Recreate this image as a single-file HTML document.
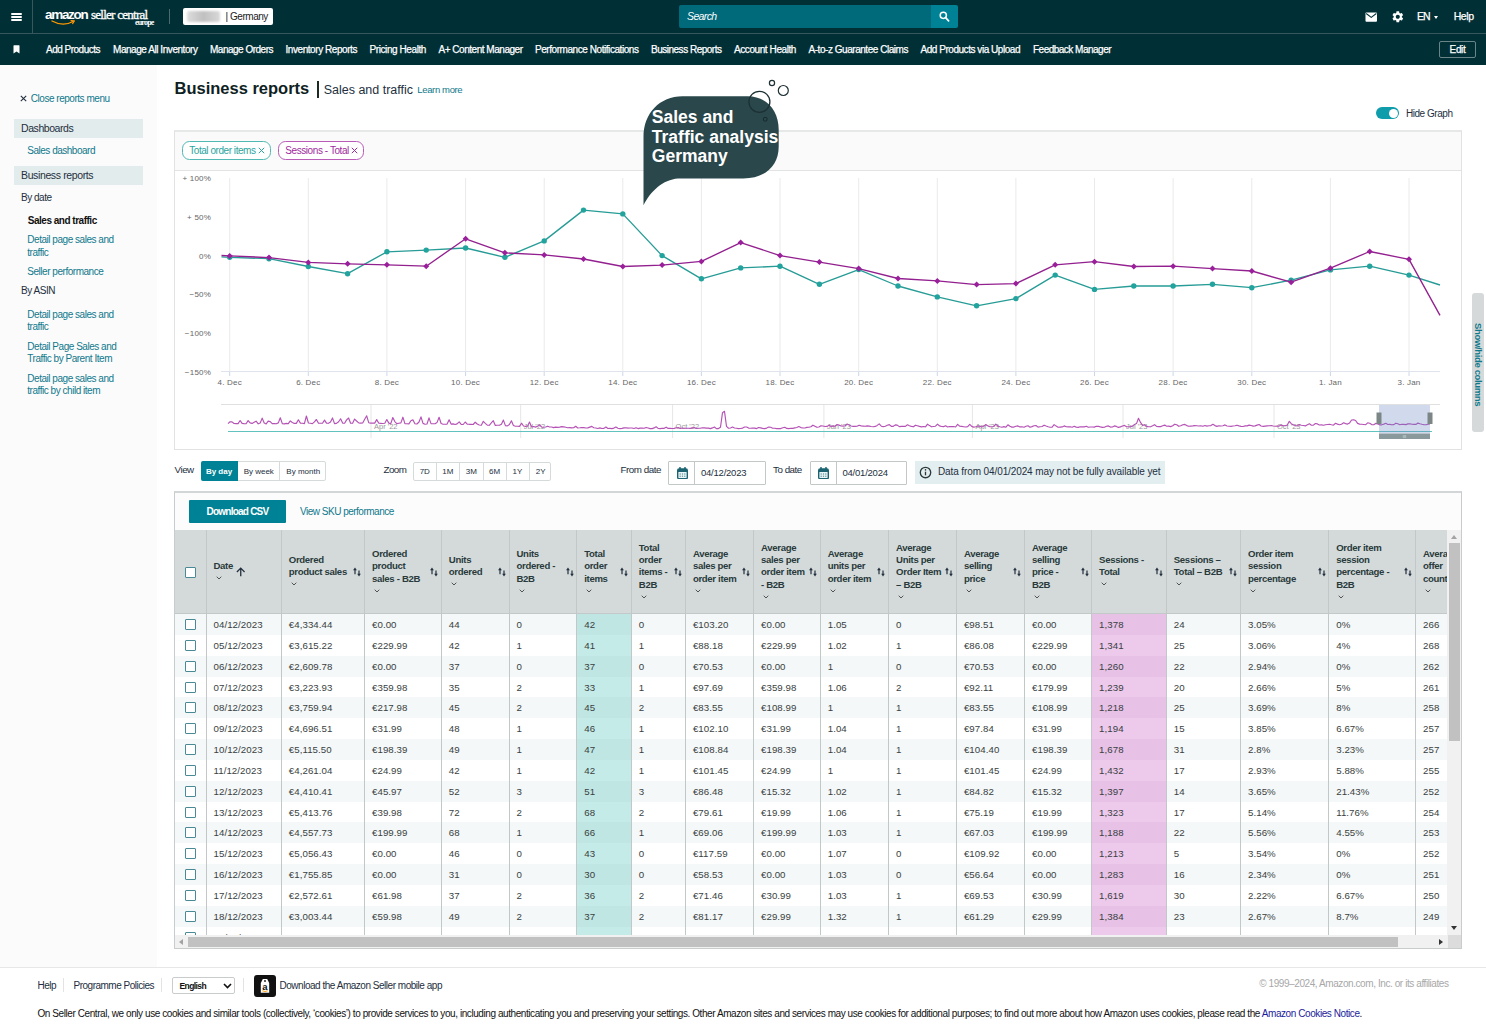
<!DOCTYPE html>
<html lang="en"><head><meta charset="utf-8"><title>Business reports - Sales and traffic</title>
<style>*{box-sizing:border-box;margin:0;padding:0}
html,body{width:1486px;height:1024px;overflow:hidden;background:#fff;font-family:"Liberation Sans",sans-serif;color:#232f3e}
.abs{position:absolute}
#hdr{position:absolute;left:0;top:0;width:1486px;height:65px;background:#002f36}
#hdr .hline{position:absolute;left:0;top:33px;width:1486px;height:1px;background:#37575c}
#hdr .vline{position:absolute;left:32px;top:0;width:1px;height:33px;background:#37575c}
#hdr .burger{position:absolute;left:11px;top:13px;width:11px;height:9px}
#hdr .burger i{display:block;height:1.8px;background:#fff;margin-bottom:1.3px;border-radius:1px}
.logo{position:absolute;left:45px;top:7px;color:#fff;white-space:nowrap;width:120px;height:22px}
.logo .a{position:absolute;left:0;top:0;font:bold 13.5px "Liberation Sans",sans-serif;letter-spacing:-0.7px;line-height:15px}
.logo .s{position:absolute;left:46px;top:0;font:13px "Liberation Serif",serif;line-height:15px;-webkit-text-stroke:0.3px #fff}
.logo .e{position:absolute;left:90px;top:11px;font:bold 8px "Liberation Serif",serif;letter-spacing:-0.3px;line-height:9px}
.logo .smile{position:absolute;left:6px;top:13px}
.sep1{position:absolute;left:169px;top:9px;width:1px;height:15px;background:#4a6a70}
.mkt{position:absolute;left:183px;top:8px;width:90px;height:17px;background:#fff;border-radius:2px;font-size:10.5px;color:#222;line-height:17px}
.mkt b{position:absolute;left:4px;top:3px;width:33px;height:11px;background:linear-gradient(90deg,#ddd,#c0c0c0 50%,#d8d8d8);border-radius:2px;filter:blur(1.2px)}
.mkt span{position:absolute;left:42.5px;top:0;font-weight:normal;white-space:nowrap}
.search{position:absolute;left:679px;top:4.8px;width:252px;height:23.7px;background:#00697a;color:#fff;font:italic 10.5px "Liberation Sans",sans-serif;line-height:23px;padding-left:8px;border-radius:2px 0 0 2px}
.sbtn{position:absolute;left:931px;top:4.8px;width:27px;height:23.7px;background:#008296;border-radius:0 2px 2px 0}
.nav{position:absolute;top:44px;left:0;color:#fff;font-size:10.5px;white-space:nowrap;line-height:12px;-webkit-text-stroke:0.25px #fff}
.nav span{position:absolute;top:0}
.hr{position:absolute;top:10.3px;color:#fff;font-size:11px;line-height:13px;-webkit-text-stroke:0.25px #fff;white-space:nowrap}
#hdr .caret{position:absolute;left:1434.2px;top:15.6px;width:0;height:0;border-left:2.8px solid transparent;border-right:2.8px solid transparent;border-top:3.2px solid #fff}
.edit{position:absolute;left:1439px;top:41px;width:37px;height:17px;border:1px solid #6a858a;border-radius:2px;color:#fff;font-size:10.5px;text-align:center;line-height:15px;-webkit-text-stroke:0.25px #fff}
#side{position:absolute;left:0;top:65px;width:157px;height:901.6px;background:#fbfbfb}
#side .it{position:absolute;font-size:10.5px;line-height:12.7px;margin-top:0.6px;color:#10798c;white-space:nowrap}
#side .sec{position:absolute;left:14px;width:129px;height:19px;background:#e3ecec;font-size:11px;line-height:19px;padding-left:7px;color:#232f3e}
#side .hd{position:absolute;margin-top:0.6px;font-size:10.5px;line-height:12px;color:#232f3e}
h1{position:absolute;left:174.5px;top:77.6px;font:bold 16.5px "Liberation Sans",sans-serif;line-height:20px;color:#0f1f24;white-space:nowrap}
.vbar{position:absolute;left:317px;top:81px;width:1.6px;height:16.5px;background:#1c2b22}
.t14{position:absolute;left:323.8px;top:81.5px;line-height:16px;color:#232f3e;white-space:nowrap}
.lm{position:absolute;left:417.3px;top:84.3px;line-height:12px;color:#10798c;white-space:nowrap}
.sub{position:absolute;left:315.5px;top:77px;white-space:nowrap;line-height:22px}
.sub .bar{font-size:19px;color:#23351f}
.sub .t{font-size:14px;color:#232f3e}
.sub .l{font-size:9.5px;color:#10798c}
.toggle{position:absolute;left:1376px;top:107px;width:23px;height:12px;border-radius:6px;background:#0f9cab}
.toggle i{position:absolute;right:1.5px;top:1.5px;width:9px;height:9px;border-radius:5px;background:#fff}
.hg{position:absolute;left:1406px;top:107px;font-size:10.5px;line-height:13px;color:#232f3e}
#chart{position:absolute;left:174px;top:130px;width:1288px;height:320px;border:1px solid #e1e3e3;border-top:2px solid #e6e8e8;background:#fff}
#chart .chips{position:absolute;left:0;top:0;width:1286px;height:39px;background:#fafafa;border-bottom:1px solid #e2e4e4}
#chart svg.abs{left:-1px !important;top:-2px !important}
.chip{position:absolute;top:9.2px;height:19px;border-radius:7.5px;font-size:10px;line-height:17.4px;padding-left:6.6px;white-space:nowrap;background:#fff}
.chip .x{margin-left:2.5px;position:relative;top:0px}
.ax{font:8px "Liberation Sans",sans-serif;fill:#666;letter-spacing:0.2px}
.nv{font:7.5px "Liberation Sans",sans-serif;fill:#999}
.bb{font:bold 17.5px "Liberation Sans",sans-serif;fill:#fff}
.lbl{position:absolute;font-size:10.5px;line-height:13px;color:#232f3e;white-space:nowrap}
.seg{position:absolute;border:1px solid #d5dbdb;border-radius:2px;background:#fff;font-size:8px;color:#232f3e}
.seg span{position:absolute;top:-1px;bottom:-1px;text-align:center;border-right:1px solid #d5dbdb;display:flex;align-items:center;justify-content:center}
.seg span.on{background:#008296;color:#fff;font-weight:bold;left:-1px !important;border-radius:2px 0 0 2px;border-right:0}
.date{position:absolute;width:97.5px;height:23.5px;border:1.3px solid #c2c8c8;border-radius:1px;background:#fff;font-size:10px;color:#232f3e}
.date i{position:absolute;left:0;top:0;width:26px;height:100%;padding-left:1.4px;border-right:1.2px solid #c2c8c8;display:flex;align-items:center;justify-content:center}
.date span{position:absolute;left:32px;top:0;line-height:21.4px}
.info{position:absolute;width:250px;height:22.6px;background:#e3eef0;font-size:10.5px;line-height:22.6px;color:#232f3e;white-space:nowrap}
.info svg{position:absolute;left:4.3px;top:4.6px}
.info span{position:absolute;left:23.5px;top:0}
#tbox{position:absolute;left:174px;top:491px;width:1288px;height:458px;border:1px solid #c8cccc;border-top:2px solid #d3d6d6;background:#fcfcfc}
.dl{position:absolute;left:14px;top:6.5px;width:97px;height:23.6px;padding-top:0.8px;background:#008296;color:#fff;font-size:10.5px;font-weight:bold;letter-spacing:-0.3px;text-align:center;line-height:23.6px;border-radius:1px}
.sku{position:absolute;left:125px;top:12.6px;font-size:10px;color:#10798c;line-height:12px}
#tv{position:absolute;overflow:hidden;background:#fff}
.th-bg{position:absolute;left:0;top:0;width:100%;background:#d4dada;border-bottom:1px solid #c3c9c9}
.rowbg{position:absolute;left:0;width:100%}
.vb{position:absolute;top:0;width:1px;height:100%;background:#c2c8c8}
.th{position:absolute;top:0;height:83px;display:flex;align-items:center;font-size:9.6px;font-weight:bold;color:#2a3a3c;line-height:12.3px;letter-spacing:-0.33px;padding-top:2px}
.th .tx{-webkit-text-stroke:0px}
.th .srt{position:absolute;right:2.6px;top:36.5px}
.th .chv{position:relative;top:-1.2px;left:2px}
.th .up{position:relative;top:7.3px;margin-left:0.6px;margin-top:-8px}
.td{position:absolute;font-size:9.7px;color:#3a3f42;white-space:nowrap;letter-spacing:0.06px}
.cb{position:absolute;width:11px;height:11px;border:1px solid #4a8a96;background:#fff;border-radius:1px}
.vsb{position:absolute;left:1447px;top:530px;width:14px;height:405px;background:#f1f1f1}
.vsb b{position:absolute;left:2px;top:13px;width:11px;height:198px;background:#c1c1c1}
.vsb i{position:absolute;left:3.5px;width:0;height:0;border-left:3px solid transparent;border-right:3px solid transparent}
.vsb i.up{top:5px;border-bottom:4px solid #a3a3a3}
.vsb i.dn{bottom:5px;border-top:4px solid #333}
.hsb{position:absolute;left:175px;top:935px;width:1286px;height:13px;background:#f1f1f1}
.hsb b{position:absolute;left:13px;top:1.5px;width:1210px;height:10.5px;background:#c1c1c1}
.hsb i{position:absolute;top:3.5px;width:0;height:0;border-top:3px solid transparent;border-bottom:3px solid transparent}
.hsb i.lf{left:4px;border-right:4px solid #a3a3a3}
.hsb i.rt{right:18px;border-left:4px solid #333}
.shc{position:absolute;left:1472px;top:293px;width:12px;height:138.5px;background:#d6d9d9;border-radius:3px}
.shc span{position:absolute;left:6px;top:30px;font-weight:bold;letter-spacing:-0.35px;transform-origin:0 0;transform:rotate(90deg) translateY(-50%);font-size:9.5px;color:#10798c;white-space:nowrap;line-height:12px}
.fline{position:absolute;left:0;top:966.6px;width:1486px;height:1px;background:#e7e7e7}
.ft{position:absolute;font-size:10.5px;line-height:13px;color:#232f3e;white-space:nowrap}
.fsep{position:absolute;top:978px;width:1px;height:14px;background:#e3e3e3}
.sel{position:absolute;left:171.5px;top:976.5px;width:63.5px;height:17.5px;border:1px solid #c9cccc;border-radius:2px;font-size:9.5px;font-weight:bold;line-height:16px;padding-left:7px;color:#111;background:#fff}
.sel svg{position:absolute;right:2.5px;top:5px}
.app{position:absolute;left:253.5px;top:975px;width:22px;height:22px}
.ck{position:absolute;left:37.5px;top:1007px;font-size:10px;line-height:13px;color:#111;white-space:nowrap}
.ck span{color:#1b1b9c}
.hsb u{position:absolute;right:0;top:0;width:13.5px;height:13px;background:#dcdcdc}
</style></head><body>

<div id="hdr">
 <div class="hline"></div><div class="vline"></div>
 <div class="burger"><i></i><i></i><i></i></div>
 <div class="logo"><span class="a" style="font-size:13.5px;letter-spacing:-1.310px;">amazon</span><span class="s" style="font-size:13px;letter-spacing:-0.740px;">seller central</span><span class="e" style="font-size:8px;letter-spacing:-0.818px;">europe</span>
  <svg class="smile" width="26" height="6" viewBox="0 0 26 6"><path d="M1 1 Q12 7 22 1.5" fill="none" stroke="#f90" stroke-width="1.4" stroke-linecap="round"/><path d="M20 0.6 L23.4 0.9 L21.6 3.6" fill="none" stroke="#f90" stroke-width="1.1" stroke-linecap="round" stroke-linejoin="round"/></svg>
 </div>
 <div class="sep1"></div>
 <div class="mkt"><b></b><span style="font-size:10px;letter-spacing:-0.455px;">| Germany</span></div>
 <div class="search" style="font-size:10.5px;letter-spacing:-0.628px;">Search</div>
 <div class="sbtn"><svg width="27" height="23" viewBox="0 0 27 23"><circle cx="12.3" cy="10.3" r="3.1" fill="none" stroke="#fff" stroke-width="1.5"/><path d="M14.6 12.7 L17.6 15.8" stroke="#fff" stroke-width="1.7" stroke-linecap="round"/></svg></div>
 <svg class="abs" style="left:1364.500px;top:11.800px" width="12.500" height="10.600" viewBox="0 0 13 11"><rect x="0.5" y="0.5" width="12" height="9.6" rx="1" fill="#fff"/><path d="M1.2 1.6 L6.5 5.6 L11.8 1.6" fill="none" stroke="#002f36" stroke-width="1.1"/></svg>
 <svg class="abs" style="left:1391px;top:10.300px" width="13.600" height="13.600" viewBox="0 0 24 24"><path fill="#fff" d="M19.14 12.94c.04-.3.06-.61.06-.94 0-.32-.02-.64-.07-.94l2.03-1.58a.49.49 0 0 0 .12-.61l-1.92-3.32a.488.488 0 0 0-.59-.22l-2.39.96c-.5-.38-1.03-.7-1.62-.94l-.36-2.54a.484.484 0 0 0-.48-.41h-3.84c-.24 0-.43.17-.47.41l-.36 2.54c-.59.24-1.13.57-1.62.94l-2.39-.96c-.22-.08-.47 0-.59.22L2.74 8.87c-.12.21-.08.47.12.61l2.03 1.58c-.05.3-.09.63-.09.94s.02.64.07.94l-2.03 1.58a.49.49 0 0 0-.12.61l1.92 3.32c.12.22.37.29.59.22l2.39-.96c.5.38 1.03.7 1.62.94l.36 2.54c.05.24.24.41.48.41h3.84c.24 0 .44-.17.47-.41l.36-2.54c.59-.24 1.13-.56 1.62-.94l2.39.96c.22.08.47 0 .59-.22l1.92-3.32c.12-.22.07-.47-.12-.61l-2.01-1.58zM12 15.6c-1.98 0-3.600-1.62-3.600-3.600s1.62-3.600 3.600-3.600 3.600 1.62 3.600 3.600-1.62 3.600-3.600 3.600z"/></svg>
 <div class="hr" style="left:1417px;font-size:10.5px;letter-spacing:-0.893px;">EN</div><i class="caret"></i>
 <div class="hr" style="left:1453.700px;font-size:10.5px;letter-spacing:-0.399px;">Help</div>
 <svg class="abs" style="left:13px;top:45px" width="7" height="9" viewBox="0 0 7 9"><path d="M0.5 0.8 Q0.5 0.3 1 0.3 H6 Q6.5 0.3 6.500 0.8 V8.600 L3.500 6.600 L0.500 8.600 Z" fill="#fff"/></svg>
 <div class="nav"><span style="left:46px;font-size:10px;letter-spacing:-0.503px;">Add Products</span><span style="left:113px;font-size:10px;letter-spacing:-0.444px;">Manage All Inventory</span><span style="left:210px;font-size:10px;letter-spacing:-0.498px;">Manage Orders</span><span style="left:285.5px;font-size:10px;letter-spacing:-0.437px;">Inventory Reports</span><span style="left:369.5px;font-size:10px;letter-spacing:-0.411px;">Pricing Health</span><span style="left:438.5px;font-size:10px;letter-spacing:-0.476px;">A+ Content Manager</span><span style="left:535px;font-size:10px;letter-spacing:-0.440px;">Performance Notifications</span><span style="left:651px;font-size:10px;letter-spacing:-0.492px;">Business Reports</span><span style="left:734px;font-size:10px;letter-spacing:-0.416px;">Account Health</span><span style="left:808.5px;font-size:10px;letter-spacing:-0.458px;">A-to-z Guarantee Claims</span><span style="left:920.5px;font-size:10px;letter-spacing:-0.459px;">Add Products via Upload</span><span style="left:1033px;font-size:10px;letter-spacing:-0.510px;">Feedback Manager</span></div>
 <div class="edit" style="font-size:10px;letter-spacing:-0.333px;">Edit</div>
</div>

<div id="side"><svg class="abs" style="left:19.500px;top:29.700px" width="7" height="7" viewBox="0 0 7 7"><path d="M0.8 0.8 L6.200 6.200 M6.200 0.8 L0.8 6.200" stroke="#232f3e" stroke-width="1.100"/></svg><div class="it" style="left:30.8px;top:27.5px;font-size:10px;letter-spacing:-0.470px;">Close reports menu</div><div class="sec" style="top:54px;font-size:10.5px;letter-spacing:-0.432px;">Dashboards</div><div class="it" style="left:27.3px;top:79.1px;font-size:10px;letter-spacing:-0.490px;">Sales dashboard</div><div class="sec" style="top:101.200px;font-size:10.5px;letter-spacing:-0.375px;">Business reports</div><div class="hd" style="left:21px;top:126px;font-size:10px;letter-spacing:-0.473px;">By date</div><div class="it" style="left:27.8px;top:149px;color:#111;font-weight:bold;font-size:10px;letter-spacing:-0.491px;">Sales and traffic</div><div class="it" style="left:27.3px;top:168.5px;font-size:10px;letter-spacing:-0.47px;">Detail page sales and<br>traffic</div><div class="it" style="left:27.3px;top:200px;font-size:10px;letter-spacing:-0.47px;">Seller performance</div><div class="hd" style="left:21px;top:219.5px;font-size:10px;letter-spacing:-0.47px;">By ASIN</div><div class="it" style="left:27.3px;top:243px;font-size:10px;letter-spacing:-0.47px;">Detail page sales and<br>traffic</div><div class="it" style="left:27.3px;top:275px;font-size:10px;letter-spacing:-0.47px;">Detail Page Sales and<br>Traffic by Parent Item</div><div class="it" style="left:27.3px;top:307px;font-size:10px;letter-spacing:-0.47px;">Detail page sales and<br>traffic by child item</div></div>

<h1 style="font-size:16.5px;letter-spacing:0.000px;">Business reports</h1>
<div class="vbar"></div>
<div class="t14" style="font-size:12.5px;letter-spacing:-0.018px;">Sales and traffic</div>
<div class="lm" style="font-size:9.5px;letter-spacing:-0.358px;">Learn more</div>
<div class="toggle"><i></i></div><div class="hg" style="font-size:10px;letter-spacing:-0.464px;">Hide Graph</div>


<div id="chart">
 <div class="chips"></div>
 <div class="chip" style="left:6.700px;width:89.500px;color:#2aa5a0;border:1.500px solid #52b8b3"><span style="font-size:10px;letter-spacing:-0.454px;">Total order items</span><svg class="x" width="7" height="7" viewBox="0 0 7 7"><path d="M0.8 0.8 L6.200 6.200 M6.200 0.8 L0.8 6.200" stroke="#2aa5a0" stroke-width="1"/></svg></div>
 <div class="chip" style="left:102.700px;width:86px;color:#a02aa0;border:1.500px solid #b85cb8"><span style="font-size:10px;letter-spacing:-0.425px;">Sessions - Total</span><svg class="x" width="7" height="7" viewBox="0 0 7 7"><path d="M0.8 0.8 L6.200 6.200 M6.200 0.8 L0.8 6.200" stroke="#a02aa0" stroke-width="1"/></svg></div>
 <svg class="abs" style="left:0;top:0" width="1288" height="320" viewBox="0 0 1288 320"><path d="M55.7 48 V241" stroke="#eaeaea" stroke-width="1"/><path d="M55.7 241 V246" stroke="#ccd6eb" stroke-width="1"/><path d="M134.3 48 V241" stroke="#eaeaea" stroke-width="1"/><path d="M134.3 241 V246" stroke="#ccd6eb" stroke-width="1"/><path d="M212.9 48 V241" stroke="#eaeaea" stroke-width="1"/><path d="M212.9 241 V246" stroke="#ccd6eb" stroke-width="1"/><path d="M291.6 48 V241" stroke="#eaeaea" stroke-width="1"/><path d="M291.6 241 V246" stroke="#ccd6eb" stroke-width="1"/><path d="M370.2 48 V241" stroke="#eaeaea" stroke-width="1"/><path d="M370.2 241 V246" stroke="#ccd6eb" stroke-width="1"/><path d="M448.8 48 V241" stroke="#eaeaea" stroke-width="1"/><path d="M448.8 241 V246" stroke="#ccd6eb" stroke-width="1"/><path d="M527.4 48 V241" stroke="#eaeaea" stroke-width="1"/><path d="M527.4 241 V246" stroke="#ccd6eb" stroke-width="1"/><path d="M606.0 48 V241" stroke="#eaeaea" stroke-width="1"/><path d="M606.0 241 V246" stroke="#ccd6eb" stroke-width="1"/><path d="M684.7 48 V241" stroke="#eaeaea" stroke-width="1"/><path d="M684.7 241 V246" stroke="#ccd6eb" stroke-width="1"/><path d="M763.3 48 V241" stroke="#eaeaea" stroke-width="1"/><path d="M763.3 241 V246" stroke="#ccd6eb" stroke-width="1"/><path d="M841.9 48 V241" stroke="#eaeaea" stroke-width="1"/><path d="M841.9 241 V246" stroke="#ccd6eb" stroke-width="1"/><path d="M920.5 48 V241" stroke="#eaeaea" stroke-width="1"/><path d="M920.5 241 V246" stroke="#ccd6eb" stroke-width="1"/><path d="M999.1 48 V241" stroke="#eaeaea" stroke-width="1"/><path d="M999.1 241 V246" stroke="#ccd6eb" stroke-width="1"/><path d="M1077.8 48 V241" stroke="#eaeaea" stroke-width="1"/><path d="M1077.8 241 V246" stroke="#ccd6eb" stroke-width="1"/><path d="M1156.4 48 V241" stroke="#eaeaea" stroke-width="1"/><path d="M1156.4 241 V246" stroke="#ccd6eb" stroke-width="1"/><path d="M1235.0 48 V241" stroke="#eaeaea" stroke-width="1"/><path d="M1235.0 241 V246" stroke="#ccd6eb" stroke-width="1"/><path d="M47 241.500 H1266" stroke="#dfe3ea" stroke-width="1"/><text x="37" y="51" text-anchor="end" class="ax">+ 100%</text><text x="37" y="90" text-anchor="end" class="ax">+ 50%</text><text x="37" y="128.5" text-anchor="end" class="ax">0%</text><text x="37" y="167" text-anchor="end" class="ax">−50%</text><text x="37" y="205.5" text-anchor="end" class="ax">−100%</text><text x="37" y="244.5" text-anchor="end" class="ax">−150%</text><text x="55.7" y="255" text-anchor="middle" class="ax">4. Dec</text><text x="134.3" y="255" text-anchor="middle" class="ax">6. Dec</text><text x="212.9" y="255" text-anchor="middle" class="ax">8. Dec</text><text x="291.6" y="255" text-anchor="middle" class="ax">10. Dec</text><text x="370.2" y="255" text-anchor="middle" class="ax">12. Dec</text><text x="448.8" y="255" text-anchor="middle" class="ax">14. Dec</text><text x="527.4" y="255" text-anchor="middle" class="ax">16. Dec</text><text x="606.0" y="255" text-anchor="middle" class="ax">18. Dec</text><text x="684.7" y="255" text-anchor="middle" class="ax">20. Dec</text><text x="763.3" y="255" text-anchor="middle" class="ax">22. Dec</text><text x="841.9" y="255" text-anchor="middle" class="ax">24. Dec</text><text x="920.5" y="255" text-anchor="middle" class="ax">26. Dec</text><text x="999.1" y="255" text-anchor="middle" class="ax">28. Dec</text><text x="1077.8" y="255" text-anchor="middle" class="ax">30. Dec</text><text x="1156.4" y="255" text-anchor="middle" class="ax">1. Jan</text><text x="1235.0" y="255" text-anchor="middle" class="ax">3. Jan</text><polyline points="47.5,126.9 55.7,127.3 95.0,128.7 134.3,136.5 173.6,143.7 212.9,121.8 252.2,120.1 291.6,118.0 330.9,127.3 370.2,110.9 409.5,80.1 448.8,83.9 488.1,125.6 527.4,148.8 566.7,137.9 606.0,136.2 645.4,154.3 684.7,139.6 724.0,156.0 763.3,166.9 802.6,175.8 841.9,168.6 881.2,145.1 920.5,159.4 959.8,156.0 999.1,156.0 1038.5,154.3 1077.8,157.7 1117.1,150.2 1156.4,139.9 1195.7,136.2 1235.0,145.1 1266.0,155.0" fill="none" stroke="#279c96" stroke-width="1.350" stroke-linejoin="round"/><circle cx="55.7" cy="127.3" r="2.700" fill="#22a39d"/><circle cx="95.0" cy="128.7" r="2.700" fill="#22a39d"/><circle cx="134.3" cy="136.5" r="2.700" fill="#22a39d"/><circle cx="173.6" cy="143.7" r="2.700" fill="#22a39d"/><circle cx="212.9" cy="121.8" r="2.700" fill="#22a39d"/><circle cx="252.2" cy="120.1" r="2.700" fill="#22a39d"/><circle cx="291.6" cy="118.0" r="2.700" fill="#22a39d"/><circle cx="330.9" cy="127.3" r="2.700" fill="#22a39d"/><circle cx="370.2" cy="110.9" r="2.700" fill="#22a39d"/><circle cx="409.5" cy="80.1" r="2.700" fill="#22a39d"/><circle cx="448.8" cy="83.9" r="2.700" fill="#22a39d"/><circle cx="488.1" cy="125.6" r="2.700" fill="#22a39d"/><circle cx="527.4" cy="148.8" r="2.700" fill="#22a39d"/><circle cx="566.7" cy="137.9" r="2.700" fill="#22a39d"/><circle cx="606.0" cy="136.2" r="2.700" fill="#22a39d"/><circle cx="645.4" cy="154.3" r="2.700" fill="#22a39d"/><circle cx="684.7" cy="139.6" r="2.700" fill="#22a39d"/><circle cx="724.0" cy="156.0" r="2.700" fill="#22a39d"/><circle cx="763.3" cy="166.9" r="2.700" fill="#22a39d"/><circle cx="802.6" cy="175.8" r="2.700" fill="#22a39d"/><circle cx="841.9" cy="168.6" r="2.700" fill="#22a39d"/><circle cx="881.2" cy="145.1" r="2.700" fill="#22a39d"/><circle cx="920.5" cy="159.4" r="2.700" fill="#22a39d"/><circle cx="959.8" cy="156.0" r="2.700" fill="#22a39d"/><circle cx="999.1" cy="156.0" r="2.700" fill="#22a39d"/><circle cx="1038.5" cy="154.3" r="2.700" fill="#22a39d"/><circle cx="1077.8" cy="157.7" r="2.700" fill="#22a39d"/><circle cx="1117.1" cy="150.2" r="2.700" fill="#22a39d"/><circle cx="1156.4" cy="139.9" r="2.700" fill="#22a39d"/><circle cx="1195.7" cy="136.2" r="2.700" fill="#22a39d"/><circle cx="1235.0" cy="145.1" r="2.700" fill="#22a39d"/><polyline points="47.5,125.5 55.7,125.9 95.0,127.6 134.3,132.4 173.6,133.8 212.9,134.8 252.2,136.2 291.6,108.8 330.9,122.8 370.2,124.9 409.5,129.0 448.8,136.5 488.1,135.1 527.4,131.4 566.7,112.6 606.0,125.6 645.4,132.1 684.7,138.6 724.0,148.5 763.3,150.9 802.6,154.6 841.9,153.6 881.2,134.8 920.5,131.7 959.8,136.5 999.1,136.2 1038.5,138.6 1077.8,141.0 1117.1,152.2 1156.4,138.2 1195.7,121.5 1235.0,129.3 1266.0,185.4" fill="none" stroke="#93208f" stroke-width="1.350" stroke-linejoin="round"/><path d="M55.7 122.9 l3 3 l-3 3 l-3 -3z" fill="#9a1f9a"/><path d="M95.0 124.6 l3 3 l-3 3 l-3 -3z" fill="#9a1f9a"/><path d="M134.3 129.4 l3 3 l-3 3 l-3 -3z" fill="#9a1f9a"/><path d="M173.6 130.8 l3 3 l-3 3 l-3 -3z" fill="#9a1f9a"/><path d="M212.9 131.8 l3 3 l-3 3 l-3 -3z" fill="#9a1f9a"/><path d="M252.2 133.2 l3 3 l-3 3 l-3 -3z" fill="#9a1f9a"/><path d="M291.6 105.8 l3 3 l-3 3 l-3 -3z" fill="#9a1f9a"/><path d="M330.9 119.8 l3 3 l-3 3 l-3 -3z" fill="#9a1f9a"/><path d="M370.2 121.9 l3 3 l-3 3 l-3 -3z" fill="#9a1f9a"/><path d="M409.5 126.0 l3 3 l-3 3 l-3 -3z" fill="#9a1f9a"/><path d="M448.8 133.5 l3 3 l-3 3 l-3 -3z" fill="#9a1f9a"/><path d="M488.1 132.1 l3 3 l-3 3 l-3 -3z" fill="#9a1f9a"/><path d="M527.4 128.4 l3 3 l-3 3 l-3 -3z" fill="#9a1f9a"/><path d="M566.7 109.6 l3 3 l-3 3 l-3 -3z" fill="#9a1f9a"/><path d="M606.0 122.6 l3 3 l-3 3 l-3 -3z" fill="#9a1f9a"/><path d="M645.4 129.1 l3 3 l-3 3 l-3 -3z" fill="#9a1f9a"/><path d="M684.7 135.6 l3 3 l-3 3 l-3 -3z" fill="#9a1f9a"/><path d="M724.0 145.5 l3 3 l-3 3 l-3 -3z" fill="#9a1f9a"/><path d="M763.3 147.9 l3 3 l-3 3 l-3 -3z" fill="#9a1f9a"/><path d="M802.6 151.6 l3 3 l-3 3 l-3 -3z" fill="#9a1f9a"/><path d="M841.9 150.6 l3 3 l-3 3 l-3 -3z" fill="#9a1f9a"/><path d="M881.2 131.8 l3 3 l-3 3 l-3 -3z" fill="#9a1f9a"/><path d="M920.5 128.7 l3 3 l-3 3 l-3 -3z" fill="#9a1f9a"/><path d="M959.8 133.5 l3 3 l-3 3 l-3 -3z" fill="#9a1f9a"/><path d="M999.1 133.2 l3 3 l-3 3 l-3 -3z" fill="#9a1f9a"/><path d="M1038.5 135.6 l3 3 l-3 3 l-3 -3z" fill="#9a1f9a"/><path d="M1077.8 138.0 l3 3 l-3 3 l-3 -3z" fill="#9a1f9a"/><path d="M1117.1 149.2 l3 3 l-3 3 l-3 -3z" fill="#9a1f9a"/><path d="M1156.4 135.2 l3 3 l-3 3 l-3 -3z" fill="#9a1f9a"/><path d="M1195.7 118.5 l3 3 l-3 3 l-3 -3z" fill="#9a1f9a"/><path d="M1235.0 126.3 l3 3 l-3 3 l-3 -3z" fill="#9a1f9a"/><path d="M47 274.5 H1266" stroke="#e0e0e0"/><path d="M197.0 275 V308" stroke="#e6e6e6"/><text x="200.0" y="299" class="nv">Apr '22</text><path d="M346.7 275 V308" stroke="#e6e6e6"/><text x="349.7" y="299" class="nv">Jul '22</text><path d="M498.6 275 V308" stroke="#e6e6e6"/><text x="501.6" y="299" class="nv">Oct '22</text><path d="M649.9 275 V308" stroke="#e6e6e6"/><text x="652.9" y="299" class="nv">Jan '23</text><path d="M798.4 275 V308" stroke="#e6e6e6"/><text x="801.4" y="299" class="nv">Apr '23</text><path d="M949.0 275 V308" stroke="#e6e6e6"/><text x="952.0" y="299" class="nv">Jul '23</text><path d="M1100.0 275 V308" stroke="#e6e6e6"/><text x="1103.0" y="299" class="nv">Oct '23</text><polyline points="54.0,293.6 56.0,291.8 58.0,291.9 60.0,293.5 62.0,293.6 64.1,293.6 66.1,290.5 68.1,293.4 70.1,293.6 72.1,293.7 74.1,290.6 76.1,292.9 78.1,293.4 80.1,292.2 82.1,291.2 84.2,293.8 86.2,293.0 88.2,288.1 90.2,293.0 92.2,293.9 94.2,291.1 96.2,291.6 98.2,293.6 100.2,293.6 102.2,293.8 104.3,292.9 106.3,287.8 108.3,293.6 110.3,293.9 112.3,293.4 114.3,293.7 116.3,290.9 118.3,292.5 120.3,293.4 122.3,293.4 124.4,289.8 126.4,293.1 128.4,293.2 130.4,293.6 132.4,286.0 134.4,293.0 136.4,293.2 138.4,293.7 140.4,291.8 142.4,289.5 144.5,293.3 146.5,293.2 148.5,293.2 150.5,290.1 152.5,293.1 154.5,293.3 156.5,292.1 158.5,287.9 160.5,293.6 162.5,293.4 164.6,291.8 166.6,288.8 168.6,293.1 170.6,293.2 172.6,289.9 174.6,288.0 176.6,293.2 178.6,293.3 180.6,289.1 182.6,291.0 184.7,292.9 186.7,293.1 188.7,292.9 190.7,289.2 192.7,285.8 194.7,292.7 196.7,293.1 198.7,293.0 200.7,293.1 202.7,289.6 204.8,293.3 206.8,293.4 208.8,293.5 210.8,293.3 212.8,289.5 214.8,293.1 216.8,293.6 218.8,287.5 220.8,291.6 222.8,293.6 224.9,293.2 226.9,292.9 228.9,287.2 230.9,293.7 232.9,293.8 234.9,293.9 236.9,290.8 238.9,289.8 240.9,293.7 242.9,294.0 245.0,292.0 247.0,286.9 249.0,293.4 251.0,294.2 253.0,294.0 255.0,287.9 257.0,293.6 259.0,293.7 261.0,293.8 263.0,292.6 265.1,287.3 267.1,293.5 269.1,294.2 271.1,294.3 273.1,294.1 275.1,289.8 277.1,294.1 279.1,293.9 281.1,294.5 283.1,293.9 285.2,291.8 287.2,294.4 289.2,294.5 291.2,292.0 293.2,294.1 295.2,294.3 297.2,294.3 299.2,294.5 301.2,292.2 303.2,294.0 305.3,295.0 307.3,295.3 309.3,291.3 311.3,293.4 313.3,295.1 315.3,295.3 317.3,292.8 319.3,290.7 321.3,295.4 323.3,295.2 325.4,295.3 327.4,294.2 329.4,290.1 331.4,295.6 333.4,295.9 335.4,294.5 337.4,290.8 339.4,295.5 341.4,296.2 343.4,296.3 345.5,296.4 347.5,293.2 349.5,296.0 351.5,296.4 353.5,296.3 355.5,292.1 357.5,296.7 359.5,296.5 361.5,297.1 363.5,296.3 365.6,294.9 367.6,297.0 369.6,297.3 371.6,297.0 373.6,296.2 375.6,297.0 377.6,297.0 379.6,297.6 381.6,297.1 383.6,297.4 385.7,297.1 387.7,296.6 389.7,296.9 391.7,297.2 393.7,297.8 395.7,297.6 397.7,297.9 399.7,297.8 401.7,296.3 403.7,298.0 405.8,297.8 407.8,297.5 409.8,297.6 411.8,298.0 413.8,297.9 415.8,297.1 417.8,296.4 419.8,297.8 421.8,298.0 423.8,298.5 425.9,297.9 427.9,298.5 429.9,298.4 431.9,297.0 433.9,298.5 435.9,298.4 437.9,298.6 439.9,298.1 441.9,297.0 443.9,298.2 446.0,298.6 448.0,298.4 450.0,297.9 452.0,297.8 454.0,298.1 456.0,298.0 458.0,298.0 460.0,298.5 462.0,297.7 464.0,298.6 466.1,298.1 468.1,298.1 470.1,298.3 472.1,297.5 474.1,298.0 476.1,298.6 478.1,298.6 480.1,297.9 482.1,296.8 484.1,298.4 486.2,298.6 488.2,298.3 490.2,298.3 492.2,297.2 494.2,298.4 496.2,298.3 498.2,298.5 500.2,298.4 502.2,297.7 504.2,297.5 506.3,298.5 508.3,298.0 510.3,298.3 512.3,298.2 514.3,298.2 516.3,298.4 518.3,297.9 520.3,297.5 522.3,298.4 524.3,298.2 526.4,298.3 528.4,297.7 530.4,297.9 532.4,298.1 534.4,298.1 536.4,298.6 538.4,297.9 540.4,297.0 542.4,298.6 544.4,298.6 546.5,297.2 548.5,282.7 550.5,281.3 552.5,296.4 554.5,298.2 556.5,298.0 558.5,297.1 560.5,298.0 562.5,298.3 564.5,298.6 566.6,298.5 568.6,298.1 570.6,297.0 572.6,297.0 574.6,298.1 576.6,298.2 578.6,298.0 580.6,298.1 582.6,298.6 584.6,297.5 586.7,297.9 588.7,298.4 590.7,298.6 592.7,298.1 594.7,297.1 596.7,297.2 598.7,298.2 600.7,298.3 602.7,298.6 604.7,298.5 606.8,298.6 608.8,297.7 610.8,297.3 612.8,298.4 614.8,298.6 616.8,298.3 618.8,298.4 620.8,297.9 622.8,297.5 624.8,296.5 626.9,297.6 628.9,298.0 630.9,298.0 632.9,297.4 634.9,297.2 636.9,296.8 638.9,295.2 640.9,296.2 642.9,297.3 644.9,297.0 647.0,295.7 649.0,296.0 651.0,296.5 653.0,296.4 655.0,295.2 657.0,296.4 659.0,296.1 661.0,296.2 663.0,294.5 665.0,295.1 667.1,296.0 669.1,296.1 671.1,295.7 673.1,294.0 675.1,295.1 677.1,296.0 679.1,296.4 681.1,296.4 683.1,296.3 685.1,295.3 687.2,295.9 689.2,296.1 691.2,296.3 693.2,295.9 695.2,296.1 697.2,296.5 699.2,296.7 701.2,296.4 703.2,295.4 705.2,293.9 707.3,296.2 709.3,296.6 711.3,296.3 713.3,295.3 715.3,294.6 717.3,296.3 719.3,296.3 721.3,294.9 723.3,295.1 725.3,296.6 727.4,296.4 729.4,296.2 731.4,296.4 733.4,294.8 735.4,295.7 737.4,296.4 739.4,296.8 741.4,295.2 743.4,295.7 745.4,296.4 747.5,296.9 749.5,296.5 751.5,296.8 753.5,294.2 755.5,295.6 757.5,296.8 759.5,296.5 761.5,296.2 763.5,294.2 765.5,295.9 767.6,296.5 769.6,296.6 771.6,295.8 773.6,297.0 775.6,296.5 777.6,296.6 779.6,296.5 781.6,297.0 783.6,294.3 785.6,296.2 787.7,296.4 789.7,296.7 791.7,297.0 793.7,296.6 795.7,294.4 797.7,296.4 799.7,297.1 801.7,296.7 803.7,296.0 805.7,296.1 807.8,297.0 809.8,296.1 811.8,294.5 813.8,295.9 815.8,296.7 817.8,296.7 819.8,296.5 821.8,294.2 823.8,296.1 825.8,296.8 827.9,297.2 829.9,296.6 831.9,297.2 833.9,294.8 835.9,296.3 837.9,297.1 839.9,297.1 841.9,296.2 843.9,295.9 845.9,296.9 848.0,296.8 850.0,297.2 852.0,296.3 854.0,295.8 856.0,297.2 858.0,296.6 860.0,295.8 862.0,295.5 864.0,297.1 866.0,296.7 868.1,296.5 870.1,295.2 872.1,296.0 874.1,296.7 876.1,297.2 878.1,297.1 880.1,294.6 882.1,296.1 884.1,297.3 886.1,297.1 888.2,296.9 890.2,295.9 892.2,296.7 894.2,296.9 896.2,296.7 898.2,297.2 900.2,296.3 902.2,297.1 904.2,297.4 906.2,296.8 908.3,296.9 910.3,296.9 912.3,296.3 914.3,297.3 916.3,297.0 918.3,297.0 920.3,297.1 922.3,296.3 924.3,296.3 926.3,296.9 928.4,297.4 930.4,297.3 932.4,296.3 934.4,295.9 936.4,297.1 938.4,297.0 940.4,295.9 942.4,296.4 944.4,297.4 946.4,296.9 948.5,296.0 950.5,295.4 952.5,296.8 954.5,296.7 956.5,296.6 958.5,296.1 960.5,294.5 962.5,293.6 964.5,288.3 966.5,292.4 968.6,295.3 970.6,294.9 972.6,296.4 974.6,296.7 976.6,296.8 978.6,295.8 980.6,294.7 982.6,296.4 984.6,296.6 986.6,296.6 988.7,295.8 990.7,295.1 992.7,296.2 994.7,296.1 996.7,296.6 998.7,295.8 1000.7,294.2 1002.7,294.7 1004.7,296.3 1006.7,295.8 1008.8,294.7 1010.8,294.4 1012.8,295.6 1014.8,296.3 1016.8,296.1 1018.8,295.9 1020.8,295.6 1022.8,295.8 1024.8,296.0 1026.8,295.8 1028.9,296.3 1030.9,295.5 1032.9,296.1 1034.9,295.8 1036.9,295.6 1038.9,294.3 1040.9,295.6 1042.9,296.4 1044.9,295.8 1046.9,296.0 1049.0,295.7 1051.0,294.9 1053.0,296.0 1055.0,296.2 1057.0,296.4 1059.0,296.0 1061.0,295.8 1063.0,295.2 1065.0,295.9 1067.0,296.4 1069.1,296.5 1071.1,295.9 1073.1,295.9 1075.1,295.1 1077.1,295.5 1079.1,296.1 1081.1,295.9 1083.1,295.1 1085.1,294.5 1087.1,296.0 1089.2,296.4 1091.2,296.1 1093.2,295.9 1095.2,295.7 1097.2,295.5 1099.2,296.0 1101.2,296.2 1103.2,296.0 1105.2,296.1 1107.2,295.1 1109.3,295.8 1111.3,295.7 1113.3,295.0 1115.3,291.3 1117.3,293.6 1119.3,295.0 1121.3,295.5 1123.3,295.9 1125.3,294.5 1127.3,295.3 1129.4,295.5 1131.4,295.9 1133.4,294.7 1135.4,293.8 1137.4,295.2 1139.4,295.1 1141.4,293.5 1143.4,293.9 1145.4,295.0 1147.4,294.9 1149.5,295.3 1151.5,294.8 1153.5,294.5 1155.5,294.3 1157.5,294.8 1159.5,295.1 1161.5,293.3 1163.5,294.1 1165.5,294.7 1167.5,294.2 1169.6,292.8 1171.6,293.6 1173.6,294.1 1175.6,292.9 1177.6,290.0 1179.6,289.7 1181.6,290.5 1183.6,293.4 1185.6,294.1 1187.6,294.3 1189.7,294.5 1191.7,294.7 1193.7,292.8 1195.7,293.3 1197.7,294.6 1199.7,294.7 1201.7,293.4 1203.7,293.9 1205.7,294.8 1207.7,294.8 1209.8,294.1 1211.8,293.3 1213.8,294.5 1215.8,294.4 1217.8,294.8 1219.8,294.6 1221.8,293.2 1223.8,293.8 1225.8,294.7 1227.8,294.3 1229.9,294.4 1231.9,294.6 1233.9,293.9 1235.9,293.7 1237.9,294.3 1239.9,294.4 1241.9,294.4 1243.9,293.1 1245.9,293.8 1247.9,294.3 1250.0,294.7 1252.0,294.8 1254.0,294.2 1256.0,293.9" fill="none" stroke="#b552b5" stroke-width="1.150" stroke-linejoin="round"/><path d="M54 301.5 H1258" stroke="#62c2bd" stroke-width="1"/><rect x="1205" y="275" width="51" height="28.500" fill="#6685c2" fill-opacity="0.3"/><rect x="1205" y="303.5" width="51" height="5.500" fill="#8a9a9c"/><text x="1230.5" y="307.5" text-anchor="middle" style="font:4px 'Liberation Sans',sans-serif;fill:#dfe5e5">III</text><rect x="1202.5" y="282.5" width="5" height="11.500" fill="#7c8686"/><rect x="1253.5" y="282.5" width="5" height="11.500" fill="#7c8686"/></svg>
</div>


<svg class="abs" style="left:630px;top:70px" width="180" height="145" viewBox="630 70 180 145">
 <path d="M643.500 205.300 V137 C643.500 113 660 96.200 682.400 96.200 H747.600 C767 96.200 778.700 111 778.700 129.500 V146.500 C778.700 166 765 178.400 743.300 178.400 H678 C663 179.500 650.500 191 643.500 205.300 Z" fill="#2a484c"/>
 <circle cx="759.4" cy="101.8" r="10.500" fill="none" stroke="#1d3034" stroke-width="1.300"/>
 <circle cx="772" cy="83" r="2.600" fill="none" stroke="#1d3034" stroke-width="1.200"/>
 <circle cx="783.3" cy="90.5" r="5" fill="none" stroke="#1d3034" stroke-width="1.200"/>
 <rect x="763.5" y="117.500" width="3.500" height="3.500" rx="0.800" fill="none" stroke="#16282b" stroke-width="1"/>
 <text x="651.800" y="122.600" class="bb">Sales and</text>
 <text x="651.800" y="142.500" class="bb">Traffic analysis</text>
 <text x="651.800" y="162.300" class="bb">Germany</text>
</svg>


<div class="lbl" style="left:174.600px;top:463.300px;font-size:9.8px;letter-spacing:-0.491px;">View</div>
<div class="seg" style="left:200.500px;top:461px;width:125px;height:20px">
 <span class="on" style="left:0;width:37px">By day</span><span style="left:37px;width:41.500px">By week</span><span style="left:78.500px;width:46.500px;border-right:0">By month</span>
</div>
<div class="lbl" style="left:383.500px;top:463.300px;font-size:9.8px;letter-spacing:-0.563px;">Zoom</div>
<div class="seg" style="left:413px;top:461.500px;width:138px;height:19px">
 <span style="left:0;width:22.500px">7D</span><span style="left:22.500px;width:23.500px">1M</span><span style="left:46px;width:23.500px">3M</span><span style="left:69.500px;width:23px">6M</span><span style="left:92.500px;width:23px">1Y</span><span style="left:115.500px;width:22.500px;border-right:0">2Y</span>
</div>
<div class="lbl" style="left:620.400px;top:463.300px;font-size:9.8px;letter-spacing:-0.451px;">From date</div>
<div class="date" style="left:668px;top:461px"><i><svg width="11" height="12.500" viewBox="0 0 11 12.500"><rect x="0.700" y="2" width="9.600" height="9.800" rx="1.400" fill="#eaf6f7" stroke="#1d6472" stroke-width="1.400"/><path d="M0.700 3.200 Q0.700 2 2 2 H9 Q10.300 2 10.300 3.200 V5 H0.700 Z" fill="#1d6472"/><path d="M3 0.500 V2.600 M8 0.500 V2.600" stroke="#1d6472" stroke-width="1.500" stroke-linecap="round"/><path d="M2.600 7 h1.200 M4.900 7 h1.200 M7.200 7 h1.200 M2.600 9.200 h1.200 M4.900 9.200 h1.200 M7.200 9.200 h1.200" stroke="#2a6f7c" stroke-width="0.900"/></svg></i><span style="font-size:9.5px;letter-spacing:-0.225px;">04/12/2023</span></div>
<div class="lbl" style="left:773px;top:463.300px;font-size:9.8px;letter-spacing:-0.478px;">To date</div>
<div class="date" style="left:809.500px;top:461px"><i><svg width="11" height="12.500" viewBox="0 0 11 12.500"><rect x="0.700" y="2" width="9.600" height="9.800" rx="1.400" fill="#eaf6f7" stroke="#1d6472" stroke-width="1.400"/><path d="M0.700 3.200 Q0.700 2 2 2 H9 Q10.300 2 10.300 3.200 V5 H0.700 Z" fill="#1d6472"/><path d="M3 0.500 V2.600 M8 0.500 V2.600" stroke="#1d6472" stroke-width="1.500" stroke-linecap="round"/><path d="M2.600 7 h1.200 M4.900 7 h1.200 M7.200 7 h1.200 M2.600 9.200 h1.200 M4.900 9.200 h1.200 M7.200 9.200 h1.200" stroke="#2a6f7c" stroke-width="0.900"/></svg></i><span style="font-size:9.5px;letter-spacing:-0.225px;">04/01/2024</span></div>
<div class="info" style="left:914.500px;top:461.300px"><svg width="13" height="13" viewBox="0 0 13 13"><circle cx="6.500" cy="6.500" r="5.200" fill="none" stroke="#2c3a3c" stroke-width="1.350"/><path d="M6.500 5.700 V9.300" stroke="#333" stroke-width="1.300"/><circle cx="6.500" cy="3.900" r="0.800" fill="#333"/></svg><span style="font-size:10px;letter-spacing:-0.108px;">Data from 04/01/2024 may not be fully available yet</span></div>


<div id="tbox">
 <div class="dl" style="font-size:10px;letter-spacing:-0.776px;">Download CSV</div>
 <div class="sku" style="font-size:10px;letter-spacing:-0.498px;">View SKU performance</div>
</div>
<div id="tv" style="left:174.5px;top:530px;width:1272.5px;height:405px"><div class="th-bg" style="height:83.5px"></div><div class="rowbg" style="top:84.00px;height:20.84px;background:#f4f8f8"></div><div class="rowbg" style="top:104.84px;height:20.84px;background:#fff"></div><div class="rowbg" style="top:125.68px;height:20.84px;background:#f4f8f8"></div><div class="rowbg" style="top:146.52px;height:20.84px;background:#fff"></div><div class="rowbg" style="top:167.36px;height:20.84px;background:#f4f8f8"></div><div class="rowbg" style="top:188.20px;height:20.84px;background:#fff"></div><div class="rowbg" style="top:209.04px;height:20.84px;background:#f4f8f8"></div><div class="rowbg" style="top:229.88px;height:20.84px;background:#fff"></div><div class="rowbg" style="top:250.72px;height:20.84px;background:#f4f8f8"></div><div class="rowbg" style="top:271.56px;height:20.84px;background:#fff"></div><div class="rowbg" style="top:292.40px;height:20.84px;background:#f4f8f8"></div><div class="rowbg" style="top:313.24px;height:20.84px;background:#fff"></div><div class="rowbg" style="top:334.08px;height:20.84px;background:#f4f8f8"></div><div class="rowbg" style="top:354.92px;height:20.84px;background:#fff"></div><div class="rowbg" style="top:375.76px;height:20.84px;background:#f4f8f8"></div><div class="rowbg" style="top:396.60px;height:20.84px;background:#fff"></div><div class="abs" style="left:401.9px;top:84.00px;width:54.9px;height:20.89px;background:#bfe6e3"></div><div class="abs" style="left:401.9px;top:104.84px;width:54.9px;height:20.89px;background:#c5ebe8"></div><div class="abs" style="left:401.9px;top:125.68px;width:54.9px;height:20.89px;background:#bfe6e3"></div><div class="abs" style="left:401.9px;top:146.52px;width:54.9px;height:20.89px;background:#c5ebe8"></div><div class="abs" style="left:401.9px;top:167.36px;width:54.9px;height:20.89px;background:#bfe6e3"></div><div class="abs" style="left:401.9px;top:188.20px;width:54.9px;height:20.89px;background:#c5ebe8"></div><div class="abs" style="left:401.9px;top:209.04px;width:54.9px;height:20.89px;background:#bfe6e3"></div><div class="abs" style="left:401.9px;top:229.88px;width:54.9px;height:20.89px;background:#c5ebe8"></div><div class="abs" style="left:401.9px;top:250.72px;width:54.9px;height:20.89px;background:#bfe6e3"></div><div class="abs" style="left:401.9px;top:271.56px;width:54.9px;height:20.89px;background:#c5ebe8"></div><div class="abs" style="left:401.9px;top:292.40px;width:54.9px;height:20.89px;background:#bfe6e3"></div><div class="abs" style="left:401.9px;top:313.24px;width:54.9px;height:20.89px;background:#c5ebe8"></div><div class="abs" style="left:401.9px;top:334.08px;width:54.9px;height:20.89px;background:#bfe6e3"></div><div class="abs" style="left:401.9px;top:354.92px;width:54.9px;height:20.89px;background:#c5ebe8"></div><div class="abs" style="left:401.9px;top:375.76px;width:54.9px;height:20.89px;background:#bfe6e3"></div><div class="abs" style="left:401.9px;top:396.60px;width:54.9px;height:20.89px;background:#c5ebe8"></div><div class="abs" style="left:916.8px;top:84.00px;width:75.0px;height:20.89px;background:#e7c2e6"></div><div class="abs" style="left:916.8px;top:104.84px;width:75.0px;height:20.89px;background:#edc9ec"></div><div class="abs" style="left:916.8px;top:125.68px;width:75.0px;height:20.89px;background:#e7c2e6"></div><div class="abs" style="left:916.8px;top:146.52px;width:75.0px;height:20.89px;background:#edc9ec"></div><div class="abs" style="left:916.8px;top:167.36px;width:75.0px;height:20.89px;background:#e7c2e6"></div><div class="abs" style="left:916.8px;top:188.20px;width:75.0px;height:20.89px;background:#edc9ec"></div><div class="abs" style="left:916.8px;top:209.04px;width:75.0px;height:20.89px;background:#e7c2e6"></div><div class="abs" style="left:916.8px;top:229.88px;width:75.0px;height:20.89px;background:#edc9ec"></div><div class="abs" style="left:916.8px;top:250.72px;width:75.0px;height:20.89px;background:#e7c2e6"></div><div class="abs" style="left:916.8px;top:271.56px;width:75.0px;height:20.89px;background:#edc9ec"></div><div class="abs" style="left:916.8px;top:292.40px;width:75.0px;height:20.89px;background:#e7c2e6"></div><div class="abs" style="left:916.8px;top:313.24px;width:75.0px;height:20.89px;background:#edc9ec"></div><div class="abs" style="left:916.8px;top:334.08px;width:75.0px;height:20.89px;background:#e7c2e6"></div><div class="abs" style="left:916.8px;top:354.92px;width:75.0px;height:20.89px;background:#edc9ec"></div><div class="abs" style="left:916.8px;top:375.76px;width:75.0px;height:20.89px;background:#e7c2e6"></div><div class="abs" style="left:916.8px;top:396.60px;width:75.0px;height:20.89px;background:#edc9ec"></div><div class="vb" style="left:31.0px"></div><div class="vb" style="left:106.3px"></div><div class="vb" style="left:189.5px"></div><div class="vb" style="left:266.3px"></div><div class="vb" style="left:334.0px"></div><div class="vb" style="left:401.7px"></div><div class="vb" style="left:456.3px"></div><div class="vb" style="left:510.4px"></div><div class="vb" style="left:578.5px"></div><div class="vb" style="left:645.2px"></div><div class="vb" style="left:713.6px"></div><div class="vb" style="left:781.4px"></div><div class="vb" style="left:849.5px"></div><div class="vb" style="left:916.6px"></div><div class="vb" style="left:991.3px"></div><div class="vb" style="left:1065.5px"></div><div class="vb" style="left:1153.7px"></div><div class="vb" style="left:1240.5px"></div><div class="cb" style="left:10.0px;top:36.5px"></div><div class="th" style="left:39.0px;width:67.3px"><div class="thi"><span class="tx">Date <svg class="up" width="9.500" height="9.500" viewBox="0 0 9.500 9.500"><path d="M4.750 9.300 V1.300 M0.900 5 L4.750 1.100 L8.600 5" fill="none" stroke="#232f3e" stroke-width="1.300"/></svg></span><br><svg class="chv" width="6" height="4" viewBox="0 0 6 4"><path d="M0.700 0.700 L3 3 L5.300 0.700" fill="none" stroke="#444" stroke-width="0.900"/></svg></div></div><div class="th" style="left:114.3px;width:75.2px"><div class="thi"><span class="tx">Ordered<br>product sales</span><br><svg class="chv" width="6" height="4" viewBox="0 0 6 4"><path d="M0.700 0.700 L3 3 L5.300 0.700" fill="none" stroke="#444" stroke-width="0.900"/></svg></div><svg class="srt" width="8" height="10" viewBox="0 0 8 10"><path d="M2 7.200 V2.500" fill="none" stroke="#232f3e" stroke-width="1.200"/><path d="M0.100 3.300 L2 0.500 L3.900 3.300 Z" fill="#232f3e"/><path d="M6 3.400 V7.500" fill="none" stroke="#232f3e" stroke-width="1.200"/><path d="M4.200 6.800 L6 9.600 L7.800 6.800 Z" fill="#232f3e"/></svg></div><div class="th" style="left:197.5px;width:68.8px"><div class="thi"><span class="tx">Ordered<br>product<br>sales - B2B</span><br><svg class="chv" width="6" height="4" viewBox="0 0 6 4"><path d="M0.700 0.700 L3 3 L5.300 0.700" fill="none" stroke="#444" stroke-width="0.900"/></svg></div><svg class="srt" width="8" height="10" viewBox="0 0 8 10"><path d="M2 7.200 V2.500" fill="none" stroke="#232f3e" stroke-width="1.200"/><path d="M0.100 3.300 L2 0.500 L3.900 3.300 Z" fill="#232f3e"/><path d="M6 3.400 V7.500" fill="none" stroke="#232f3e" stroke-width="1.200"/><path d="M4.200 6.800 L6 9.600 L7.800 6.800 Z" fill="#232f3e"/></svg></div><div class="th" style="left:274.3px;width:59.7px"><div class="thi"><span class="tx">Units<br>ordered</span><br><svg class="chv" width="6" height="4" viewBox="0 0 6 4"><path d="M0.700 0.700 L3 3 L5.300 0.700" fill="none" stroke="#444" stroke-width="0.900"/></svg></div><svg class="srt" width="8" height="10" viewBox="0 0 8 10"><path d="M2 7.200 V2.500" fill="none" stroke="#232f3e" stroke-width="1.200"/><path d="M0.100 3.300 L2 0.500 L3.900 3.300 Z" fill="#232f3e"/><path d="M6 3.400 V7.500" fill="none" stroke="#232f3e" stroke-width="1.200"/><path d="M4.200 6.800 L6 9.600 L7.800 6.800 Z" fill="#232f3e"/></svg></div><div class="th" style="left:342.0px;width:59.7px"><div class="thi"><span class="tx">Units<br>ordered -<br>B2B</span><br><svg class="chv" width="6" height="4" viewBox="0 0 6 4"><path d="M0.700 0.700 L3 3 L5.300 0.700" fill="none" stroke="#444" stroke-width="0.900"/></svg></div><svg class="srt" width="8" height="10" viewBox="0 0 8 10"><path d="M2 7.200 V2.500" fill="none" stroke="#232f3e" stroke-width="1.200"/><path d="M0.100 3.300 L2 0.500 L3.900 3.300 Z" fill="#232f3e"/><path d="M6 3.400 V7.500" fill="none" stroke="#232f3e" stroke-width="1.200"/><path d="M4.200 6.800 L6 9.600 L7.800 6.800 Z" fill="#232f3e"/></svg></div><div class="th" style="left:409.7px;width:46.6px"><div class="thi"><span class="tx">Total<br>order<br>items</span><br><svg class="chv" width="6" height="4" viewBox="0 0 6 4"><path d="M0.700 0.700 L3 3 L5.300 0.700" fill="none" stroke="#444" stroke-width="0.900"/></svg></div><svg class="srt" width="8" height="10" viewBox="0 0 8 10"><path d="M2 7.200 V2.500" fill="none" stroke="#232f3e" stroke-width="1.200"/><path d="M0.100 3.300 L2 0.500 L3.900 3.300 Z" fill="#232f3e"/><path d="M6 3.400 V7.500" fill="none" stroke="#232f3e" stroke-width="1.200"/><path d="M4.200 6.800 L6 9.600 L7.800 6.800 Z" fill="#232f3e"/></svg></div><div class="th" style="left:464.3px;width:46.1px"><div class="thi"><span class="tx">Total<br>order<br>items -<br>B2B</span><br><svg class="chv" width="6" height="4" viewBox="0 0 6 4"><path d="M0.700 0.700 L3 3 L5.300 0.700" fill="none" stroke="#444" stroke-width="0.900"/></svg></div><svg class="srt" width="8" height="10" viewBox="0 0 8 10"><path d="M2 7.200 V2.500" fill="none" stroke="#232f3e" stroke-width="1.200"/><path d="M0.100 3.300 L2 0.500 L3.900 3.300 Z" fill="#232f3e"/><path d="M6 3.400 V7.500" fill="none" stroke="#232f3e" stroke-width="1.200"/><path d="M4.200 6.800 L6 9.600 L7.800 6.800 Z" fill="#232f3e"/></svg></div><div class="th" style="left:518.4px;width:60.1px"><div class="thi"><span class="tx">Average<br>sales per<br>order item</span><br><svg class="chv" width="6" height="4" viewBox="0 0 6 4"><path d="M0.700 0.700 L3 3 L5.300 0.700" fill="none" stroke="#444" stroke-width="0.900"/></svg></div><svg class="srt" width="8" height="10" viewBox="0 0 8 10"><path d="M2 7.200 V2.500" fill="none" stroke="#232f3e" stroke-width="1.200"/><path d="M0.100 3.300 L2 0.500 L3.900 3.300 Z" fill="#232f3e"/><path d="M6 3.400 V7.500" fill="none" stroke="#232f3e" stroke-width="1.200"/><path d="M4.200 6.800 L6 9.600 L7.800 6.800 Z" fill="#232f3e"/></svg></div><div class="th" style="left:586.5px;width:58.7px"><div class="thi"><span class="tx">Average<br>sales per<br>order item<br>- B2B</span><br><svg class="chv" width="6" height="4" viewBox="0 0 6 4"><path d="M0.700 0.700 L3 3 L5.300 0.700" fill="none" stroke="#444" stroke-width="0.900"/></svg></div><svg class="srt" width="8" height="10" viewBox="0 0 8 10"><path d="M2 7.200 V2.500" fill="none" stroke="#232f3e" stroke-width="1.200"/><path d="M0.100 3.300 L2 0.500 L3.900 3.300 Z" fill="#232f3e"/><path d="M6 3.400 V7.500" fill="none" stroke="#232f3e" stroke-width="1.200"/><path d="M4.200 6.800 L6 9.600 L7.800 6.800 Z" fill="#232f3e"/></svg></div><div class="th" style="left:653.2px;width:60.4px"><div class="thi"><span class="tx">Average<br>units per<br>order item</span><br><svg class="chv" width="6" height="4" viewBox="0 0 6 4"><path d="M0.700 0.700 L3 3 L5.300 0.700" fill="none" stroke="#444" stroke-width="0.900"/></svg></div><svg class="srt" width="8" height="10" viewBox="0 0 8 10"><path d="M2 7.200 V2.500" fill="none" stroke="#232f3e" stroke-width="1.200"/><path d="M0.100 3.300 L2 0.500 L3.900 3.300 Z" fill="#232f3e"/><path d="M6 3.400 V7.500" fill="none" stroke="#232f3e" stroke-width="1.200"/><path d="M4.200 6.800 L6 9.600 L7.800 6.800 Z" fill="#232f3e"/></svg></div><div class="th" style="left:721.6px;width:59.8px"><div class="thi"><span class="tx">Average<br>Units per<br>Order Item<br>– B2B</span><br><svg class="chv" width="6" height="4" viewBox="0 0 6 4"><path d="M0.700 0.700 L3 3 L5.300 0.700" fill="none" stroke="#444" stroke-width="0.900"/></svg></div><svg class="srt" width="8" height="10" viewBox="0 0 8 10"><path d="M2 7.200 V2.500" fill="none" stroke="#232f3e" stroke-width="1.200"/><path d="M0.100 3.300 L2 0.500 L3.900 3.300 Z" fill="#232f3e"/><path d="M6 3.400 V7.500" fill="none" stroke="#232f3e" stroke-width="1.200"/><path d="M4.200 6.800 L6 9.600 L7.800 6.800 Z" fill="#232f3e"/></svg></div><div class="th" style="left:789.4px;width:60.1px"><div class="thi"><span class="tx">Average<br>selling<br>price</span><br><svg class="chv" width="6" height="4" viewBox="0 0 6 4"><path d="M0.700 0.700 L3 3 L5.300 0.700" fill="none" stroke="#444" stroke-width="0.900"/></svg></div><svg class="srt" width="8" height="10" viewBox="0 0 8 10"><path d="M2 7.200 V2.500" fill="none" stroke="#232f3e" stroke-width="1.200"/><path d="M0.100 3.300 L2 0.500 L3.900 3.300 Z" fill="#232f3e"/><path d="M6 3.400 V7.500" fill="none" stroke="#232f3e" stroke-width="1.200"/><path d="M4.200 6.800 L6 9.600 L7.800 6.800 Z" fill="#232f3e"/></svg></div><div class="th" style="left:857.5px;width:59.1px"><div class="thi"><span class="tx">Average<br>selling<br>price -<br>B2B</span><br><svg class="chv" width="6" height="4" viewBox="0 0 6 4"><path d="M0.700 0.700 L3 3 L5.300 0.700" fill="none" stroke="#444" stroke-width="0.900"/></svg></div><svg class="srt" width="8" height="10" viewBox="0 0 8 10"><path d="M2 7.200 V2.500" fill="none" stroke="#232f3e" stroke-width="1.200"/><path d="M0.100 3.300 L2 0.500 L3.900 3.300 Z" fill="#232f3e"/><path d="M6 3.400 V7.500" fill="none" stroke="#232f3e" stroke-width="1.200"/><path d="M4.200 6.800 L6 9.600 L7.800 6.800 Z" fill="#232f3e"/></svg></div><div class="th" style="left:924.6px;width:66.7px"><div class="thi"><span class="tx">Sessions -<br>Total</span><br><svg class="chv" width="6" height="4" viewBox="0 0 6 4"><path d="M0.700 0.700 L3 3 L5.300 0.700" fill="none" stroke="#444" stroke-width="0.900"/></svg></div><svg class="srt" width="8" height="10" viewBox="0 0 8 10"><path d="M2 7.200 V2.500" fill="none" stroke="#232f3e" stroke-width="1.200"/><path d="M0.100 3.300 L2 0.500 L3.900 3.300 Z" fill="#232f3e"/><path d="M6 3.400 V7.500" fill="none" stroke="#232f3e" stroke-width="1.200"/><path d="M4.200 6.800 L6 9.600 L7.800 6.800 Z" fill="#232f3e"/></svg></div><div class="th" style="left:999.3px;width:66.2px"><div class="thi"><span class="tx">Sessions –<br>Total – B2B</span><br><svg class="chv" width="6" height="4" viewBox="0 0 6 4"><path d="M0.700 0.700 L3 3 L5.300 0.700" fill="none" stroke="#444" stroke-width="0.900"/></svg></div><svg class="srt" width="8" height="10" viewBox="0 0 8 10"><path d="M2 7.200 V2.500" fill="none" stroke="#232f3e" stroke-width="1.200"/><path d="M0.100 3.300 L2 0.500 L3.900 3.300 Z" fill="#232f3e"/><path d="M6 3.400 V7.500" fill="none" stroke="#232f3e" stroke-width="1.200"/><path d="M4.200 6.800 L6 9.600 L7.800 6.800 Z" fill="#232f3e"/></svg></div><div class="th" style="left:1073.5px;width:80.2px"><div class="thi"><span class="tx">Order item<br>session<br>percentage</span><br><svg class="chv" width="6" height="4" viewBox="0 0 6 4"><path d="M0.700 0.700 L3 3 L5.300 0.700" fill="none" stroke="#444" stroke-width="0.900"/></svg></div><svg class="srt" width="8" height="10" viewBox="0 0 8 10"><path d="M2 7.200 V2.500" fill="none" stroke="#232f3e" stroke-width="1.200"/><path d="M0.100 3.300 L2 0.500 L3.900 3.300 Z" fill="#232f3e"/><path d="M6 3.400 V7.500" fill="none" stroke="#232f3e" stroke-width="1.200"/><path d="M4.200 6.800 L6 9.600 L7.800 6.800 Z" fill="#232f3e"/></svg></div><div class="th" style="left:1161.7px;width:78.8px"><div class="thi"><span class="tx">Order item<br>session<br>percentage -<br>B2B</span><br><svg class="chv" width="6" height="4" viewBox="0 0 6 4"><path d="M0.700 0.700 L3 3 L5.300 0.700" fill="none" stroke="#444" stroke-width="0.900"/></svg></div><svg class="srt" width="8" height="10" viewBox="0 0 8 10"><path d="M2 7.200 V2.500" fill="none" stroke="#232f3e" stroke-width="1.200"/><path d="M0.100 3.300 L2 0.500 L3.900 3.300 Z" fill="#232f3e"/><path d="M6 3.400 V7.500" fill="none" stroke="#232f3e" stroke-width="1.200"/><path d="M4.200 6.800 L6 9.600 L7.800 6.800 Z" fill="#232f3e"/></svg></div><div class="th" style="left:1248.5px;width:76.5px"><div class="thi"><span class="tx">Average<br>offer<br>count</span><br><svg class="chv" width="6" height="4" viewBox="0 0 6 4"><path d="M0.700 0.700 L3 3 L5.300 0.700" fill="none" stroke="#444" stroke-width="0.900"/></svg></div><svg class="srt" width="8" height="10" viewBox="0 0 8 10"><path d="M2 7.200 V2.500" fill="none" stroke="#232f3e" stroke-width="1.200"/><path d="M0.100 3.300 L2 0.500 L3.900 3.300 Z" fill="#232f3e"/><path d="M6 3.400 V7.500" fill="none" stroke="#232f3e" stroke-width="1.200"/><path d="M4.200 6.800 L6 9.600 L7.800 6.800 Z" fill="#232f3e"/></svg></div><div class="cb" style="left:10.0px;top:89.00px"></div><div class="td" style="left:39.0px;top:84.00px;height:20.84px;line-height:21.34px">04/12/2023</div><div class="td" style="left:114.3px;top:84.00px;height:20.84px;line-height:21.34px">€4,334.44</div><div class="td" style="left:197.5px;top:84.00px;height:20.84px;line-height:21.34px">€0.00</div><div class="td" style="left:274.3px;top:84.00px;height:20.84px;line-height:21.34px">44</div><div class="td" style="left:342.0px;top:84.00px;height:20.84px;line-height:21.34px">0</div><div class="td" style="left:409.7px;top:84.00px;height:20.84px;line-height:21.34px">42</div><div class="td" style="left:464.3px;top:84.00px;height:20.84px;line-height:21.34px">0</div><div class="td" style="left:518.4px;top:84.00px;height:20.84px;line-height:21.34px">€103.20</div><div class="td" style="left:586.5px;top:84.00px;height:20.84px;line-height:21.34px">€0.00</div><div class="td" style="left:653.2px;top:84.00px;height:20.84px;line-height:21.34px">1.05</div><div class="td" style="left:721.6px;top:84.00px;height:20.84px;line-height:21.34px">0</div><div class="td" style="left:789.4px;top:84.00px;height:20.84px;line-height:21.34px">€98.51</div><div class="td" style="left:857.5px;top:84.00px;height:20.84px;line-height:21.34px">€0.00</div><div class="td" style="left:924.6px;top:84.00px;height:20.84px;line-height:21.34px">1,378</div><div class="td" style="left:999.3px;top:84.00px;height:20.84px;line-height:21.34px">24</div><div class="td" style="left:1073.5px;top:84.00px;height:20.84px;line-height:21.34px">3.05%</div><div class="td" style="left:1161.7px;top:84.00px;height:20.84px;line-height:21.34px">0%</div><div class="td" style="left:1248.5px;top:84.00px;height:20.84px;line-height:21.34px">266</div><div class="cb" style="left:10.0px;top:109.84px"></div><div class="td" style="left:39.0px;top:104.84px;height:20.84px;line-height:21.34px">05/12/2023</div><div class="td" style="left:114.3px;top:104.84px;height:20.84px;line-height:21.34px">€3,615.22</div><div class="td" style="left:197.5px;top:104.84px;height:20.84px;line-height:21.34px">€229.99</div><div class="td" style="left:274.3px;top:104.84px;height:20.84px;line-height:21.34px">42</div><div class="td" style="left:342.0px;top:104.84px;height:20.84px;line-height:21.34px">1</div><div class="td" style="left:409.7px;top:104.84px;height:20.84px;line-height:21.34px">41</div><div class="td" style="left:464.3px;top:104.84px;height:20.84px;line-height:21.34px">1</div><div class="td" style="left:518.4px;top:104.84px;height:20.84px;line-height:21.34px">€88.18</div><div class="td" style="left:586.5px;top:104.84px;height:20.84px;line-height:21.34px">€229.99</div><div class="td" style="left:653.2px;top:104.84px;height:20.84px;line-height:21.34px">1.02</div><div class="td" style="left:721.6px;top:104.84px;height:20.84px;line-height:21.34px">1</div><div class="td" style="left:789.4px;top:104.84px;height:20.84px;line-height:21.34px">€86.08</div><div class="td" style="left:857.5px;top:104.84px;height:20.84px;line-height:21.34px">€229.99</div><div class="td" style="left:924.6px;top:104.84px;height:20.84px;line-height:21.34px">1,341</div><div class="td" style="left:999.3px;top:104.84px;height:20.84px;line-height:21.34px">25</div><div class="td" style="left:1073.5px;top:104.84px;height:20.84px;line-height:21.34px">3.06%</div><div class="td" style="left:1161.7px;top:104.84px;height:20.84px;line-height:21.34px">4%</div><div class="td" style="left:1248.5px;top:104.84px;height:20.84px;line-height:21.34px">268</div><div class="cb" style="left:10.0px;top:130.68px"></div><div class="td" style="left:39.0px;top:125.68px;height:20.84px;line-height:21.34px">06/12/2023</div><div class="td" style="left:114.3px;top:125.68px;height:20.84px;line-height:21.34px">€2,609.78</div><div class="td" style="left:197.5px;top:125.68px;height:20.84px;line-height:21.34px">€0.00</div><div class="td" style="left:274.3px;top:125.68px;height:20.84px;line-height:21.34px">37</div><div class="td" style="left:342.0px;top:125.68px;height:20.84px;line-height:21.34px">0</div><div class="td" style="left:409.7px;top:125.68px;height:20.84px;line-height:21.34px">37</div><div class="td" style="left:464.3px;top:125.68px;height:20.84px;line-height:21.34px">0</div><div class="td" style="left:518.4px;top:125.68px;height:20.84px;line-height:21.34px">€70.53</div><div class="td" style="left:586.5px;top:125.68px;height:20.84px;line-height:21.34px">€0.00</div><div class="td" style="left:653.2px;top:125.68px;height:20.84px;line-height:21.34px">1</div><div class="td" style="left:721.6px;top:125.68px;height:20.84px;line-height:21.34px">0</div><div class="td" style="left:789.4px;top:125.68px;height:20.84px;line-height:21.34px">€70.53</div><div class="td" style="left:857.5px;top:125.68px;height:20.84px;line-height:21.34px">€0.00</div><div class="td" style="left:924.6px;top:125.68px;height:20.84px;line-height:21.34px">1,260</div><div class="td" style="left:999.3px;top:125.68px;height:20.84px;line-height:21.34px">22</div><div class="td" style="left:1073.5px;top:125.68px;height:20.84px;line-height:21.34px">2.94%</div><div class="td" style="left:1161.7px;top:125.68px;height:20.84px;line-height:21.34px">0%</div><div class="td" style="left:1248.5px;top:125.68px;height:20.84px;line-height:21.34px">262</div><div class="cb" style="left:10.0px;top:151.52px"></div><div class="td" style="left:39.0px;top:146.52px;height:20.84px;line-height:21.34px">07/12/2023</div><div class="td" style="left:114.3px;top:146.52px;height:20.84px;line-height:21.34px">€3,223.93</div><div class="td" style="left:197.5px;top:146.52px;height:20.84px;line-height:21.34px">€359.98</div><div class="td" style="left:274.3px;top:146.52px;height:20.84px;line-height:21.34px">35</div><div class="td" style="left:342.0px;top:146.52px;height:20.84px;line-height:21.34px">2</div><div class="td" style="left:409.7px;top:146.52px;height:20.84px;line-height:21.34px">33</div><div class="td" style="left:464.3px;top:146.52px;height:20.84px;line-height:21.34px">1</div><div class="td" style="left:518.4px;top:146.52px;height:20.84px;line-height:21.34px">€97.69</div><div class="td" style="left:586.5px;top:146.52px;height:20.84px;line-height:21.34px">€359.98</div><div class="td" style="left:653.2px;top:146.52px;height:20.84px;line-height:21.34px">1.06</div><div class="td" style="left:721.6px;top:146.52px;height:20.84px;line-height:21.34px">2</div><div class="td" style="left:789.4px;top:146.52px;height:20.84px;line-height:21.34px">€92.11</div><div class="td" style="left:857.5px;top:146.52px;height:20.84px;line-height:21.34px">€179.99</div><div class="td" style="left:924.6px;top:146.52px;height:20.84px;line-height:21.34px">1,239</div><div class="td" style="left:999.3px;top:146.52px;height:20.84px;line-height:21.34px">20</div><div class="td" style="left:1073.5px;top:146.52px;height:20.84px;line-height:21.34px">2.66%</div><div class="td" style="left:1161.7px;top:146.52px;height:20.84px;line-height:21.34px">5%</div><div class="td" style="left:1248.5px;top:146.52px;height:20.84px;line-height:21.34px">261</div><div class="cb" style="left:10.0px;top:172.36px"></div><div class="td" style="left:39.0px;top:167.36px;height:20.84px;line-height:21.34px">08/12/2023</div><div class="td" style="left:114.3px;top:167.36px;height:20.84px;line-height:21.34px">€3,759.94</div><div class="td" style="left:197.5px;top:167.36px;height:20.84px;line-height:21.34px">€217.98</div><div class="td" style="left:274.3px;top:167.36px;height:20.84px;line-height:21.34px">45</div><div class="td" style="left:342.0px;top:167.36px;height:20.84px;line-height:21.34px">2</div><div class="td" style="left:409.7px;top:167.36px;height:20.84px;line-height:21.34px">45</div><div class="td" style="left:464.3px;top:167.36px;height:20.84px;line-height:21.34px">2</div><div class="td" style="left:518.4px;top:167.36px;height:20.84px;line-height:21.34px">€83.55</div><div class="td" style="left:586.5px;top:167.36px;height:20.84px;line-height:21.34px">€108.99</div><div class="td" style="left:653.2px;top:167.36px;height:20.84px;line-height:21.34px">1</div><div class="td" style="left:721.6px;top:167.36px;height:20.84px;line-height:21.34px">1</div><div class="td" style="left:789.4px;top:167.36px;height:20.84px;line-height:21.34px">€83.55</div><div class="td" style="left:857.5px;top:167.36px;height:20.84px;line-height:21.34px">€108.99</div><div class="td" style="left:924.6px;top:167.36px;height:20.84px;line-height:21.34px">1,218</div><div class="td" style="left:999.3px;top:167.36px;height:20.84px;line-height:21.34px">25</div><div class="td" style="left:1073.5px;top:167.36px;height:20.84px;line-height:21.34px">3.69%</div><div class="td" style="left:1161.7px;top:167.36px;height:20.84px;line-height:21.34px">8%</div><div class="td" style="left:1248.5px;top:167.36px;height:20.84px;line-height:21.34px">258</div><div class="cb" style="left:10.0px;top:193.20px"></div><div class="td" style="left:39.0px;top:188.20px;height:20.84px;line-height:21.34px">09/12/2023</div><div class="td" style="left:114.3px;top:188.20px;height:20.84px;line-height:21.34px">€4,696.51</div><div class="td" style="left:197.5px;top:188.20px;height:20.84px;line-height:21.34px">€31.99</div><div class="td" style="left:274.3px;top:188.20px;height:20.84px;line-height:21.34px">48</div><div class="td" style="left:342.0px;top:188.20px;height:20.84px;line-height:21.34px">1</div><div class="td" style="left:409.7px;top:188.20px;height:20.84px;line-height:21.34px">46</div><div class="td" style="left:464.3px;top:188.20px;height:20.84px;line-height:21.34px">1</div><div class="td" style="left:518.4px;top:188.20px;height:20.84px;line-height:21.34px">€102.10</div><div class="td" style="left:586.5px;top:188.20px;height:20.84px;line-height:21.34px">€31.99</div><div class="td" style="left:653.2px;top:188.20px;height:20.84px;line-height:21.34px">1.04</div><div class="td" style="left:721.6px;top:188.20px;height:20.84px;line-height:21.34px">1</div><div class="td" style="left:789.4px;top:188.20px;height:20.84px;line-height:21.34px">€97.84</div><div class="td" style="left:857.5px;top:188.20px;height:20.84px;line-height:21.34px">€31.99</div><div class="td" style="left:924.6px;top:188.20px;height:20.84px;line-height:21.34px">1,194</div><div class="td" style="left:999.3px;top:188.20px;height:20.84px;line-height:21.34px">15</div><div class="td" style="left:1073.5px;top:188.20px;height:20.84px;line-height:21.34px">3.85%</div><div class="td" style="left:1161.7px;top:188.20px;height:20.84px;line-height:21.34px">6.67%</div><div class="td" style="left:1248.5px;top:188.20px;height:20.84px;line-height:21.34px">257</div><div class="cb" style="left:10.0px;top:214.04px"></div><div class="td" style="left:39.0px;top:209.04px;height:20.84px;line-height:21.34px">10/12/2023</div><div class="td" style="left:114.3px;top:209.04px;height:20.84px;line-height:21.34px">€5,115.50</div><div class="td" style="left:197.5px;top:209.04px;height:20.84px;line-height:21.34px">€198.39</div><div class="td" style="left:274.3px;top:209.04px;height:20.84px;line-height:21.34px">49</div><div class="td" style="left:342.0px;top:209.04px;height:20.84px;line-height:21.34px">1</div><div class="td" style="left:409.7px;top:209.04px;height:20.84px;line-height:21.34px">47</div><div class="td" style="left:464.3px;top:209.04px;height:20.84px;line-height:21.34px">1</div><div class="td" style="left:518.4px;top:209.04px;height:20.84px;line-height:21.34px">€108.84</div><div class="td" style="left:586.5px;top:209.04px;height:20.84px;line-height:21.34px">€198.39</div><div class="td" style="left:653.2px;top:209.04px;height:20.84px;line-height:21.34px">1.04</div><div class="td" style="left:721.6px;top:209.04px;height:20.84px;line-height:21.34px">1</div><div class="td" style="left:789.4px;top:209.04px;height:20.84px;line-height:21.34px">€104.40</div><div class="td" style="left:857.5px;top:209.04px;height:20.84px;line-height:21.34px">€198.39</div><div class="td" style="left:924.6px;top:209.04px;height:20.84px;line-height:21.34px">1,678</div><div class="td" style="left:999.3px;top:209.04px;height:20.84px;line-height:21.34px">31</div><div class="td" style="left:1073.5px;top:209.04px;height:20.84px;line-height:21.34px">2.8%</div><div class="td" style="left:1161.7px;top:209.04px;height:20.84px;line-height:21.34px">3.23%</div><div class="td" style="left:1248.5px;top:209.04px;height:20.84px;line-height:21.34px">257</div><div class="cb" style="left:10.0px;top:234.88px"></div><div class="td" style="left:39.0px;top:229.88px;height:20.84px;line-height:21.34px">11/12/2023</div><div class="td" style="left:114.3px;top:229.88px;height:20.84px;line-height:21.34px">€4,261.04</div><div class="td" style="left:197.5px;top:229.88px;height:20.84px;line-height:21.34px">€24.99</div><div class="td" style="left:274.3px;top:229.88px;height:20.84px;line-height:21.34px">42</div><div class="td" style="left:342.0px;top:229.88px;height:20.84px;line-height:21.34px">1</div><div class="td" style="left:409.7px;top:229.88px;height:20.84px;line-height:21.34px">42</div><div class="td" style="left:464.3px;top:229.88px;height:20.84px;line-height:21.34px">1</div><div class="td" style="left:518.4px;top:229.88px;height:20.84px;line-height:21.34px">€101.45</div><div class="td" style="left:586.5px;top:229.88px;height:20.84px;line-height:21.34px">€24.99</div><div class="td" style="left:653.2px;top:229.88px;height:20.84px;line-height:21.34px">1</div><div class="td" style="left:721.6px;top:229.88px;height:20.84px;line-height:21.34px">1</div><div class="td" style="left:789.4px;top:229.88px;height:20.84px;line-height:21.34px">€101.45</div><div class="td" style="left:857.5px;top:229.88px;height:20.84px;line-height:21.34px">€24.99</div><div class="td" style="left:924.6px;top:229.88px;height:20.84px;line-height:21.34px">1,432</div><div class="td" style="left:999.3px;top:229.88px;height:20.84px;line-height:21.34px">17</div><div class="td" style="left:1073.5px;top:229.88px;height:20.84px;line-height:21.34px">2.93%</div><div class="td" style="left:1161.7px;top:229.88px;height:20.84px;line-height:21.34px">5.88%</div><div class="td" style="left:1248.5px;top:229.88px;height:20.84px;line-height:21.34px">255</div><div class="cb" style="left:10.0px;top:255.72px"></div><div class="td" style="left:39.0px;top:250.72px;height:20.84px;line-height:21.34px">12/12/2023</div><div class="td" style="left:114.3px;top:250.72px;height:20.84px;line-height:21.34px">€4,410.41</div><div class="td" style="left:197.5px;top:250.72px;height:20.84px;line-height:21.34px">€45.97</div><div class="td" style="left:274.3px;top:250.72px;height:20.84px;line-height:21.34px">52</div><div class="td" style="left:342.0px;top:250.72px;height:20.84px;line-height:21.34px">3</div><div class="td" style="left:409.7px;top:250.72px;height:20.84px;line-height:21.34px">51</div><div class="td" style="left:464.3px;top:250.72px;height:20.84px;line-height:21.34px">3</div><div class="td" style="left:518.4px;top:250.72px;height:20.84px;line-height:21.34px">€86.48</div><div class="td" style="left:586.5px;top:250.72px;height:20.84px;line-height:21.34px">€15.32</div><div class="td" style="left:653.2px;top:250.72px;height:20.84px;line-height:21.34px">1.02</div><div class="td" style="left:721.6px;top:250.72px;height:20.84px;line-height:21.34px">1</div><div class="td" style="left:789.4px;top:250.72px;height:20.84px;line-height:21.34px">€84.82</div><div class="td" style="left:857.5px;top:250.72px;height:20.84px;line-height:21.34px">€15.32</div><div class="td" style="left:924.6px;top:250.72px;height:20.84px;line-height:21.34px">1,397</div><div class="td" style="left:999.3px;top:250.72px;height:20.84px;line-height:21.34px">14</div><div class="td" style="left:1073.5px;top:250.72px;height:20.84px;line-height:21.34px">3.65%</div><div class="td" style="left:1161.7px;top:250.72px;height:20.84px;line-height:21.34px">21.43%</div><div class="td" style="left:1248.5px;top:250.72px;height:20.84px;line-height:21.34px">252</div><div class="cb" style="left:10.0px;top:276.56px"></div><div class="td" style="left:39.0px;top:271.56px;height:20.84px;line-height:21.34px">13/12/2023</div><div class="td" style="left:114.3px;top:271.56px;height:20.84px;line-height:21.34px">€5,413.76</div><div class="td" style="left:197.5px;top:271.56px;height:20.84px;line-height:21.34px">€39.98</div><div class="td" style="left:274.3px;top:271.56px;height:20.84px;line-height:21.34px">72</div><div class="td" style="left:342.0px;top:271.56px;height:20.84px;line-height:21.34px">2</div><div class="td" style="left:409.7px;top:271.56px;height:20.84px;line-height:21.34px">68</div><div class="td" style="left:464.3px;top:271.56px;height:20.84px;line-height:21.34px">2</div><div class="td" style="left:518.4px;top:271.56px;height:20.84px;line-height:21.34px">€79.61</div><div class="td" style="left:586.5px;top:271.56px;height:20.84px;line-height:21.34px">€19.99</div><div class="td" style="left:653.2px;top:271.56px;height:20.84px;line-height:21.34px">1.06</div><div class="td" style="left:721.6px;top:271.56px;height:20.84px;line-height:21.34px">1</div><div class="td" style="left:789.4px;top:271.56px;height:20.84px;line-height:21.34px">€75.19</div><div class="td" style="left:857.5px;top:271.56px;height:20.84px;line-height:21.34px">€19.99</div><div class="td" style="left:924.6px;top:271.56px;height:20.84px;line-height:21.34px">1,323</div><div class="td" style="left:999.3px;top:271.56px;height:20.84px;line-height:21.34px">17</div><div class="td" style="left:1073.5px;top:271.56px;height:20.84px;line-height:21.34px">5.14%</div><div class="td" style="left:1161.7px;top:271.56px;height:20.84px;line-height:21.34px">11.76%</div><div class="td" style="left:1248.5px;top:271.56px;height:20.84px;line-height:21.34px">254</div><div class="cb" style="left:10.0px;top:297.40px"></div><div class="td" style="left:39.0px;top:292.40px;height:20.84px;line-height:21.34px">14/12/2023</div><div class="td" style="left:114.3px;top:292.40px;height:20.84px;line-height:21.34px">€4,557.73</div><div class="td" style="left:197.5px;top:292.40px;height:20.84px;line-height:21.34px">€199.99</div><div class="td" style="left:274.3px;top:292.40px;height:20.84px;line-height:21.34px">68</div><div class="td" style="left:342.0px;top:292.40px;height:20.84px;line-height:21.34px">1</div><div class="td" style="left:409.7px;top:292.40px;height:20.84px;line-height:21.34px">66</div><div class="td" style="left:464.3px;top:292.40px;height:20.84px;line-height:21.34px">1</div><div class="td" style="left:518.4px;top:292.40px;height:20.84px;line-height:21.34px">€69.06</div><div class="td" style="left:586.5px;top:292.40px;height:20.84px;line-height:21.34px">€199.99</div><div class="td" style="left:653.2px;top:292.40px;height:20.84px;line-height:21.34px">1.03</div><div class="td" style="left:721.6px;top:292.40px;height:20.84px;line-height:21.34px">1</div><div class="td" style="left:789.4px;top:292.40px;height:20.84px;line-height:21.34px">€67.03</div><div class="td" style="left:857.5px;top:292.40px;height:20.84px;line-height:21.34px">€199.99</div><div class="td" style="left:924.6px;top:292.40px;height:20.84px;line-height:21.34px">1,188</div><div class="td" style="left:999.3px;top:292.40px;height:20.84px;line-height:21.34px">22</div><div class="td" style="left:1073.5px;top:292.40px;height:20.84px;line-height:21.34px">5.56%</div><div class="td" style="left:1161.7px;top:292.40px;height:20.84px;line-height:21.34px">4.55%</div><div class="td" style="left:1248.5px;top:292.40px;height:20.84px;line-height:21.34px">253</div><div class="cb" style="left:10.0px;top:318.24px"></div><div class="td" style="left:39.0px;top:313.24px;height:20.84px;line-height:21.34px">15/12/2023</div><div class="td" style="left:114.3px;top:313.24px;height:20.84px;line-height:21.34px">€5,056.43</div><div class="td" style="left:197.5px;top:313.24px;height:20.84px;line-height:21.34px">€0.00</div><div class="td" style="left:274.3px;top:313.24px;height:20.84px;line-height:21.34px">46</div><div class="td" style="left:342.0px;top:313.24px;height:20.84px;line-height:21.34px">0</div><div class="td" style="left:409.7px;top:313.24px;height:20.84px;line-height:21.34px">43</div><div class="td" style="left:464.3px;top:313.24px;height:20.84px;line-height:21.34px">0</div><div class="td" style="left:518.4px;top:313.24px;height:20.84px;line-height:21.34px">€117.59</div><div class="td" style="left:586.5px;top:313.24px;height:20.84px;line-height:21.34px">€0.00</div><div class="td" style="left:653.2px;top:313.24px;height:20.84px;line-height:21.34px">1.07</div><div class="td" style="left:721.6px;top:313.24px;height:20.84px;line-height:21.34px">0</div><div class="td" style="left:789.4px;top:313.24px;height:20.84px;line-height:21.34px">€109.92</div><div class="td" style="left:857.5px;top:313.24px;height:20.84px;line-height:21.34px">€0.00</div><div class="td" style="left:924.6px;top:313.24px;height:20.84px;line-height:21.34px">1,213</div><div class="td" style="left:999.3px;top:313.24px;height:20.84px;line-height:21.34px">5</div><div class="td" style="left:1073.5px;top:313.24px;height:20.84px;line-height:21.34px">3.54%</div><div class="td" style="left:1161.7px;top:313.24px;height:20.84px;line-height:21.34px">0%</div><div class="td" style="left:1248.5px;top:313.24px;height:20.84px;line-height:21.34px">252</div><div class="cb" style="left:10.0px;top:339.08px"></div><div class="td" style="left:39.0px;top:334.08px;height:20.84px;line-height:21.34px">16/12/2023</div><div class="td" style="left:114.3px;top:334.08px;height:20.84px;line-height:21.34px">€1,755.85</div><div class="td" style="left:197.5px;top:334.08px;height:20.84px;line-height:21.34px">€0.00</div><div class="td" style="left:274.3px;top:334.08px;height:20.84px;line-height:21.34px">31</div><div class="td" style="left:342.0px;top:334.08px;height:20.84px;line-height:21.34px">0</div><div class="td" style="left:409.7px;top:334.08px;height:20.84px;line-height:21.34px">30</div><div class="td" style="left:464.3px;top:334.08px;height:20.84px;line-height:21.34px">0</div><div class="td" style="left:518.4px;top:334.08px;height:20.84px;line-height:21.34px">€58.53</div><div class="td" style="left:586.5px;top:334.08px;height:20.84px;line-height:21.34px">€0.00</div><div class="td" style="left:653.2px;top:334.08px;height:20.84px;line-height:21.34px">1.03</div><div class="td" style="left:721.6px;top:334.08px;height:20.84px;line-height:21.34px">0</div><div class="td" style="left:789.4px;top:334.08px;height:20.84px;line-height:21.34px">€56.64</div><div class="td" style="left:857.5px;top:334.08px;height:20.84px;line-height:21.34px">€0.00</div><div class="td" style="left:924.6px;top:334.08px;height:20.84px;line-height:21.34px">1,283</div><div class="td" style="left:999.3px;top:334.08px;height:20.84px;line-height:21.34px">16</div><div class="td" style="left:1073.5px;top:334.08px;height:20.84px;line-height:21.34px">2.34%</div><div class="td" style="left:1161.7px;top:334.08px;height:20.84px;line-height:21.34px">0%</div><div class="td" style="left:1248.5px;top:334.08px;height:20.84px;line-height:21.34px">251</div><div class="cb" style="left:10.0px;top:359.92px"></div><div class="td" style="left:39.0px;top:354.92px;height:20.84px;line-height:21.34px">17/12/2023</div><div class="td" style="left:114.3px;top:354.92px;height:20.84px;line-height:21.34px">€2,572.61</div><div class="td" style="left:197.5px;top:354.92px;height:20.84px;line-height:21.34px">€61.98</div><div class="td" style="left:274.3px;top:354.92px;height:20.84px;line-height:21.34px">37</div><div class="td" style="left:342.0px;top:354.92px;height:20.84px;line-height:21.34px">2</div><div class="td" style="left:409.7px;top:354.92px;height:20.84px;line-height:21.34px">36</div><div class="td" style="left:464.3px;top:354.92px;height:20.84px;line-height:21.34px">2</div><div class="td" style="left:518.4px;top:354.92px;height:20.84px;line-height:21.34px">€71.46</div><div class="td" style="left:586.5px;top:354.92px;height:20.84px;line-height:21.34px">€30.99</div><div class="td" style="left:653.2px;top:354.92px;height:20.84px;line-height:21.34px">1.03</div><div class="td" style="left:721.6px;top:354.92px;height:20.84px;line-height:21.34px">1</div><div class="td" style="left:789.4px;top:354.92px;height:20.84px;line-height:21.34px">€69.53</div><div class="td" style="left:857.5px;top:354.92px;height:20.84px;line-height:21.34px">€30.99</div><div class="td" style="left:924.6px;top:354.92px;height:20.84px;line-height:21.34px">1,619</div><div class="td" style="left:999.3px;top:354.92px;height:20.84px;line-height:21.34px">30</div><div class="td" style="left:1073.5px;top:354.92px;height:20.84px;line-height:21.34px">2.22%</div><div class="td" style="left:1161.7px;top:354.92px;height:20.84px;line-height:21.34px">6.67%</div><div class="td" style="left:1248.5px;top:354.92px;height:20.84px;line-height:21.34px">250</div><div class="cb" style="left:10.0px;top:380.76px"></div><div class="td" style="left:39.0px;top:375.76px;height:20.84px;line-height:21.34px">18/12/2023</div><div class="td" style="left:114.3px;top:375.76px;height:20.84px;line-height:21.34px">€3,003.44</div><div class="td" style="left:197.5px;top:375.76px;height:20.84px;line-height:21.34px">€59.98</div><div class="td" style="left:274.3px;top:375.76px;height:20.84px;line-height:21.34px">49</div><div class="td" style="left:342.0px;top:375.76px;height:20.84px;line-height:21.34px">2</div><div class="td" style="left:409.7px;top:375.76px;height:20.84px;line-height:21.34px">37</div><div class="td" style="left:464.3px;top:375.76px;height:20.84px;line-height:21.34px">2</div><div class="td" style="left:518.4px;top:375.76px;height:20.84px;line-height:21.34px">€81.17</div><div class="td" style="left:586.5px;top:375.76px;height:20.84px;line-height:21.34px">€29.99</div><div class="td" style="left:653.2px;top:375.76px;height:20.84px;line-height:21.34px">1.32</div><div class="td" style="left:721.6px;top:375.76px;height:20.84px;line-height:21.34px">1</div><div class="td" style="left:789.4px;top:375.76px;height:20.84px;line-height:21.34px">€61.29</div><div class="td" style="left:857.5px;top:375.76px;height:20.84px;line-height:21.34px">€29.99</div><div class="td" style="left:924.6px;top:375.76px;height:20.84px;line-height:21.34px">1,384</div><div class="td" style="left:999.3px;top:375.76px;height:20.84px;line-height:21.34px">23</div><div class="td" style="left:1073.5px;top:375.76px;height:20.84px;line-height:21.34px">2.67%</div><div class="td" style="left:1161.7px;top:375.76px;height:20.84px;line-height:21.34px">8.7%</div><div class="td" style="left:1248.5px;top:375.76px;height:20.84px;line-height:21.34px">249</div><div class="cb" style="left:10.0px;top:401.60px"></div><div class="td" style="left:39.0px;top:396.60px;height:20.84px;line-height:21.34px">19/12/2023</div><div class="td" style="left:114.3px;top:396.60px;height:20.84px;line-height:21.34px">€3,416.68</div><div class="td" style="left:197.5px;top:396.60px;height:20.84px;line-height:21.34px">€47.98</div><div class="td" style="left:274.3px;top:396.60px;height:20.84px;line-height:21.34px">38</div><div class="td" style="left:342.0px;top:396.60px;height:20.84px;line-height:21.34px">1</div><div class="td" style="left:409.7px;top:396.60px;height:20.84px;line-height:21.34px">37</div><div class="td" style="left:464.3px;top:396.60px;height:20.84px;line-height:21.34px">1</div><div class="td" style="left:518.4px;top:396.60px;height:20.84px;line-height:21.34px">€73.91</div><div class="td" style="left:586.5px;top:396.60px;height:20.84px;line-height:21.34px">€47.98</div><div class="td" style="left:653.2px;top:396.60px;height:20.84px;line-height:21.34px">1.04</div><div class="td" style="left:721.6px;top:396.60px;height:20.84px;line-height:21.34px">1</div><div class="td" style="left:789.4px;top:396.60px;height:20.84px;line-height:21.34px">€70.94</div><div class="td" style="left:857.5px;top:396.60px;height:20.84px;line-height:21.34px">€47.98</div><div class="td" style="left:924.6px;top:396.60px;height:20.84px;line-height:21.34px">1,397</div><div class="td" style="left:999.3px;top:396.60px;height:20.84px;line-height:21.34px">18</div><div class="td" style="left:1073.5px;top:396.60px;height:20.84px;line-height:21.34px">2.46%</div><div class="td" style="left:1161.7px;top:396.60px;height:20.84px;line-height:21.34px">5.56%</div><div class="td" style="left:1248.5px;top:396.60px;height:20.84px;line-height:21.34px">250</div></div>
<div class="vsb"><i class="up"></i><b></b><i class="dn"></i></div>
<div class="hsb"><i class="lf"></i><b></b><i class="rt"></i><u></u></div>
<div class="shc"><span>Show/hide columns</span></div>


<div class="fline"></div>
<div class="ft" style="left:37.500px;top:978.500px;font-size:10px;letter-spacing:-0.517px;">Help</div>
<div class="fsep" style="left:63px"></div>
<div class="ft" style="left:73.500px;top:978.500px;font-size:10px;letter-spacing:-0.499px;">Programme Policies</div>
<div class="fsep" style="left:161px"></div>
<div class="sel"><span style="font-size:8.5px;letter-spacing:-0.599px;">English</span><svg width="9" height="6" viewBox="0 0 9 6"><path d="M1 1 L4.500 4.600 L8 1" fill="none" stroke="#111" stroke-width="1.600"/></svg></div>
<div class="fsep" style="left:243px"></div>
<div class="app"><svg width="22" height="22" viewBox="0 0 22 22"><rect width="22" height="22" rx="3" fill="#111"/><path d="M6.800 8 L8.800 4 H13.200 L15.200 8 V17.800 H6.800 Z" fill="#fff"/><circle cx="11" cy="6" r="0.900" fill="#111"/><text x="11" y="14.600" text-anchor="middle" style="font:bold 9.500px 'Liberation Sans',sans-serif;fill:#111">a</text><path d="M8.300 15.800 Q11 17.300 13.700 15.800" stroke="#f90" stroke-width="0.900" fill="none"/></svg></div>
<div class="ft" style="left:279.500px;top:978.500px;font-size:10px;letter-spacing:-0.476px;">Download the Amazon Seller mobile app</div>
<div class="ft" style="left:1259.200px;top:977px;color:#a8a8a8;font-size:10px;letter-spacing:-0.416px;">© 1999–2024, Amazon.com, Inc. or its affiliates</div>
<div class="ck" style="font-size:10px;letter-spacing:-0.424px;">On Seller Central, we only use cookies and similar tools (collectively, ‘cookies’) to provide services to you, including authenticating you and preserving your settings. Other Amazon sites and services may use cookies for additional purposes; to find out more about how Amazon uses cookies, please read the <span>Amazon Cookies Notice</span>.</div>

</body></html>
